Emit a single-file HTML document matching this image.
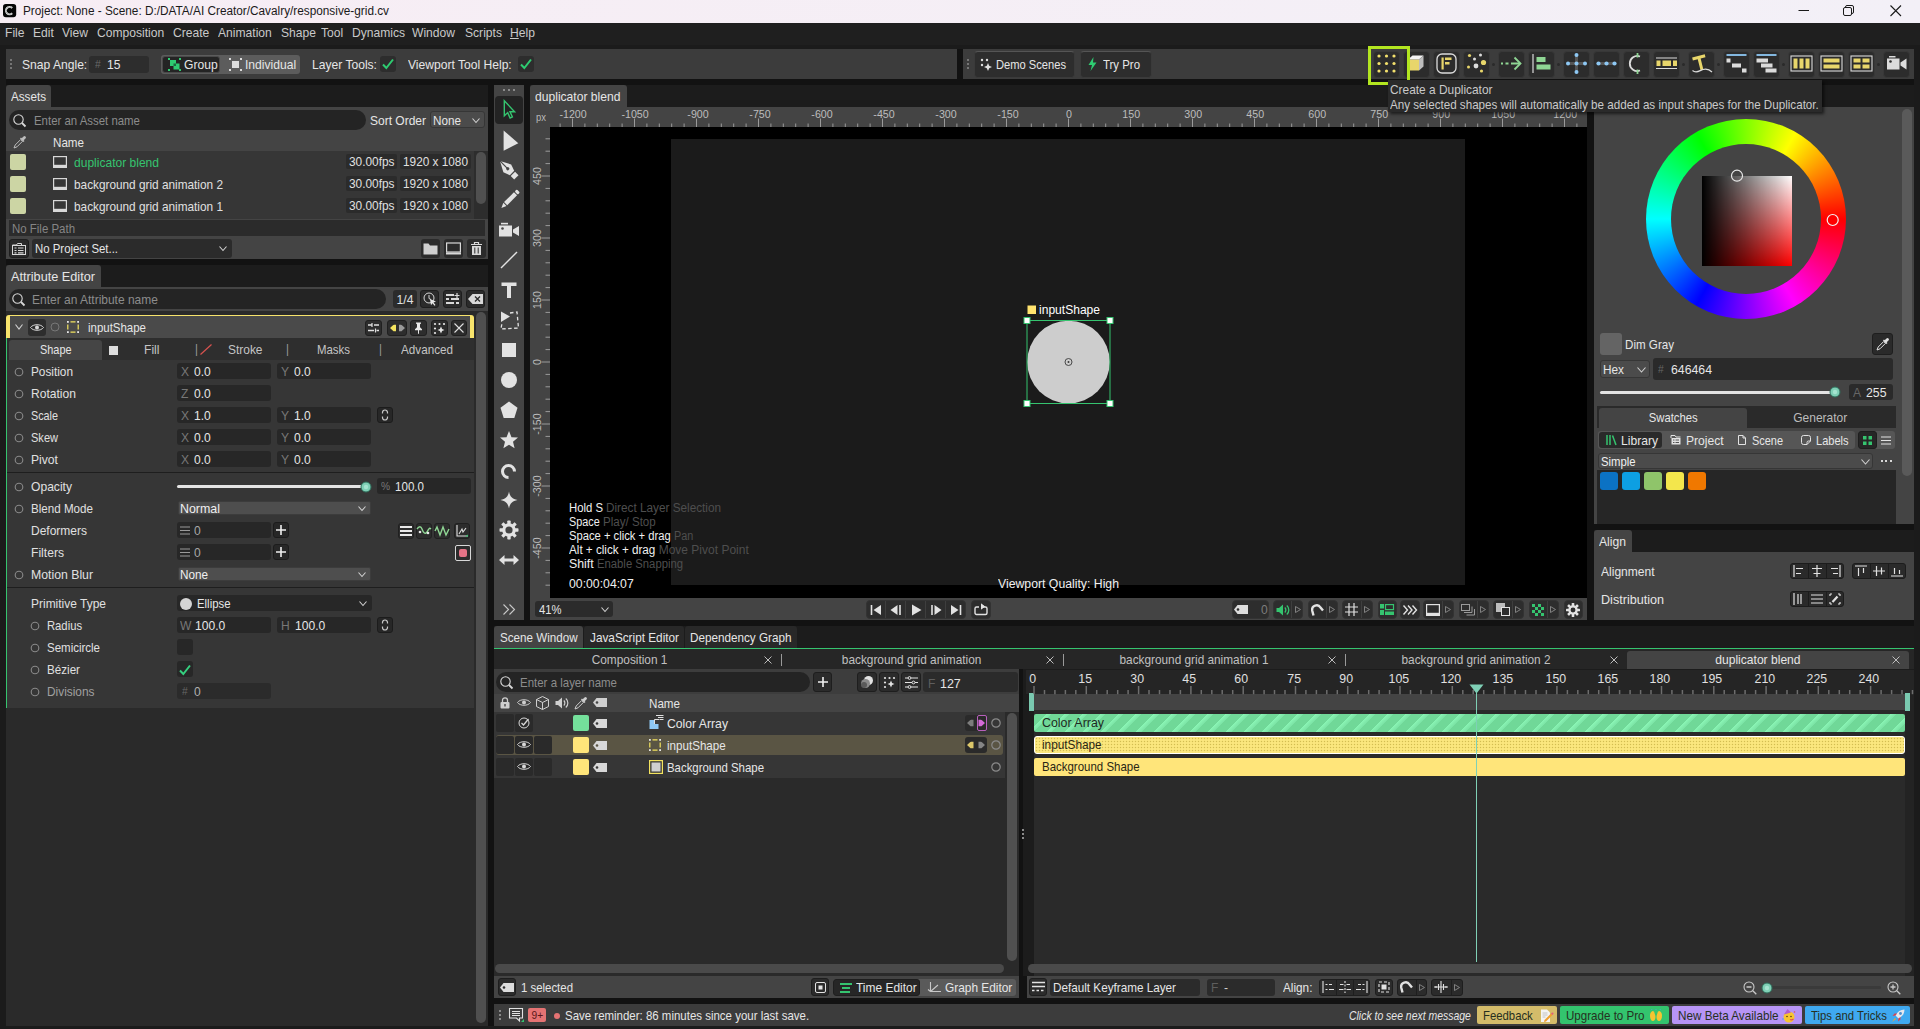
<!DOCTYPE html>
<html><head><meta charset="utf-8"><title>Cavalry</title>
<style>
html,body{margin:0;padding:0;}
body{width:1920px;height:1029px;overflow:hidden;background:#1b1b1b;position:relative;font-family:"Liberation Sans",sans-serif;font-size:13px;color:#dcdcdc;}
div,span.t,svg{position:absolute;box-sizing:border-box;}
span.t{white-space:nowrap;}
svg{overflow:visible;}
.r2{border-radius:2px}.r3{border-radius:3px}.r4{border-radius:4px}
.ph{color:#8a8a8a}
</style></head><body>
<div style="left:6px;top:79px;width:1908px;height:947px;background:#121212;"></div>
<div style="left:6px;top:85px;width:482px;height:22px;background:#1c1c1c;"></div>
<div style="left:6px;top:265px;width:482px;height:22px;background:#1c1c1c;"></div>
<div style="left:530px;top:85px;width:1057px;height:22px;background:#1c1c1c;"></div>
<div style="left:1593.5px;top:85px;width:320.5px;height:22px;background:#1c1c1c;"></div>
<div style="left:1593.5px;top:530px;width:320.5px;height:22px;background:#1c1c1c;"></div>
<div style="left:494.2px;top:626px;width:1419.8px;height:22px;background:#1c1c1c;"></div>
<div style="left:0px;top:0px;width:1920px;height:22.7px;background:linear-gradient(to right,#f7edf4,#f3f0f7);"></div>
<svg style="left:3.4px;top:4px;" width="13.2" height="13.2" viewBox="0 0 16 16"><rect x="0" y="0" width="16" height="16" rx="3.500" fill="#050505"/><path d="M11.200 4.800A4.500 4.500 0 1 0 11.200 11.200" fill="none" stroke="#e4e4e4" stroke-width="2.300"/><path d="M11.200 4.800A4.500 4.500 0 1 0 11.200 11.200" fill="none" stroke="#050505" stroke-width="0.500" stroke-dasharray="1 1"/></svg>
<span class="t" style="left:23.4px;top:3.0px;line-height:16px;font-size:12px;color:#1a1a1a;transform:scaleX(0.983);transform-origin:0 50%;">Project: None - Scene: D:/DATA/AI Creator/Cavalry/responsive-grid.cv</span>
<svg style="left:1798.3px;top:4px;" width="12" height="12" viewBox="0 0 12 12"><path d="M0.5 6.5h10.5" stroke="#1a1a1a" stroke-width="1"/></svg>
<svg style="left:1843.3px;top:4.5px;" width="12" height="12" viewBox="0 0 12 12"><rect x="0.5" y="2.5" width="8" height="8" rx="1.5" fill="none" stroke="#1a1a1a"/><path d="M2.5 2.5v-0.5a1.5 1.5 0 0 1 1.5-1.5h5a1.5 1.5 0 0 1 1.5 1.5v5a1.5 1.5 0 0 1-1.5 1.5h-0.5" fill="none" stroke="#1a1a1a"/></svg>
<svg style="left:1889.6px;top:4.5px;" width="12" height="12" viewBox="0 0 12 12"><path d="M0.5 0.5 11 11M11 0.5 0.5 11" stroke="#1a1a1a" stroke-width="1.1"/></svg>
<div style="left:0px;top:23px;width:1920px;height:22px;background:#1f1f1f;"></div>
<span class="t" style="left:5.0px;top:24.0px;line-height:17px;font-size:13px;color:#c9c9c9;transform:scaleX(0.930);transform-origin:0 50%;">File</span>
<span class="t" style="left:33.0px;top:24.0px;line-height:17px;font-size:13px;color:#c9c9c9;transform:scaleX(0.930);transform-origin:0 50%;">Edit</span>
<span class="t" style="left:62.0px;top:24.0px;line-height:17px;font-size:13px;color:#c9c9c9;transform:scaleX(0.930);transform-origin:0 50%;">View</span>
<span class="t" style="left:97.0px;top:24.0px;line-height:17px;font-size:13px;color:#c9c9c9;transform:scaleX(0.930);transform-origin:0 50%;">Composition</span>
<span class="t" style="left:173.0px;top:24.0px;line-height:17px;font-size:13px;color:#c9c9c9;transform:scaleX(0.930);transform-origin:0 50%;">Create</span>
<span class="t" style="left:218.0px;top:24.0px;line-height:17px;font-size:13px;color:#c9c9c9;transform:scaleX(0.930);transform-origin:0 50%;">Animation</span>
<span class="t" style="left:281.0px;top:24.0px;line-height:17px;font-size:13px;color:#c9c9c9;transform:scaleX(0.930);transform-origin:0 50%;">Shape</span>
<span class="t" style="left:321.0px;top:24.0px;line-height:17px;font-size:13px;color:#c9c9c9;transform:scaleX(0.930);transform-origin:0 50%;">Tool</span>
<span class="t" style="left:352.0px;top:24.0px;line-height:17px;font-size:13px;color:#c9c9c9;transform:scaleX(0.930);transform-origin:0 50%;">Dynamics</span>
<span class="t" style="left:412.0px;top:24.0px;line-height:17px;font-size:13px;color:#c9c9c9;transform:scaleX(0.930);transform-origin:0 50%;">Window</span>
<span class="t" style="left:465.0px;top:24.0px;line-height:17px;font-size:13px;color:#c9c9c9;transform:scaleX(0.930);transform-origin:0 50%;">Scripts</span>
<span class="t" style="left:510.0px;top:24.0px;line-height:17px;font-size:13px;color:#c9c9c9;transform:scaleX(0.930);transform-origin:0 50%;"><u>H</u>elp</span>
<div style="left:6px;top:49px;width:951px;height:30px;background:#3c3c3c;"></div>
<div style="left:957px;top:49px;width:6px;height:30px;background:#121212;"></div>
<div style="left:10px;top:59px;width:2px;height:2px;background:#8a8a8a;border-radius:1px;"></div>
<div style="left:10px;top:63px;width:2px;height:2px;background:#8a8a8a;border-radius:1px;"></div>
<div style="left:10px;top:67px;width:2px;height:2px;background:#8a8a8a;border-radius:1px;"></div>
<span class="t" style="left:22.0px;top:56.0px;line-height:17px;font-size:13px;color:#e6e6e6;transform:scaleX(0.930);transform-origin:0 50%;">Snap Angle:</span>
<div class="r3" style="left:89px;top:56px;width:60px;height:17px;background:#2d2d2d;"></div>
<span class="t" style="left:95.0px;top:57.0px;line-height:15px;font-size:11px;color:#6a6a6a;transform:scaleX(0.930);transform-origin:0 50%;">#</span>
<span class="t" style="left:107.0px;top:56.0px;line-height:17px;font-size:13px;color:#e6e6e6;transform:scaleX(0.930);transform-origin:0 50%;">15</span>
<div class="r3" style="left:161px;top:55px;width:139px;height:19px;background:#5c5c5c;"></div>
<div class="r3" style="left:162px;top:56px;width:58px;height:17px;background:#242424;border:1px solid #4a4a4a;"></div>
<svg style="left:168px;top:58px;" width="13" height="13" viewBox="0 0 13 13"><g fill="#2ecc71"><rect x="2" y="2" width="6" height="6"/><rect x="5.5" y="5.500" width="6" height="6"/><rect x="0" y="0" width="2" height="2"/><rect x="11" y="0" width="2" height="2"/><rect x="0" y="11" width="2" height="2"/><rect x="11" y="11" width="2" height="2"/></g><rect x="5.5" y="5.500" width="2.500" height="2.500" fill="#1a6b41"/></svg>
<span class="t" style="left:184.0px;top:56.0px;line-height:17px;font-size:13px;color:#e6e6e6;transform:scaleX(0.930);transform-origin:0 50%;">Group</span>
<svg style="left:229px;top:58px;" width="13" height="13" viewBox="0 0 13 13"><g fill="#dcdcdc"><rect x="3" y="3" width="7" height="7"/><rect x="0" y="0" width="2" height="2"/><rect x="11" y="0" width="2" height="2"/><rect x="0" y="11" width="2" height="2"/><rect x="11" y="11" width="2" height="2"/></g></svg>
<span class="t" style="left:245.0px;top:56.0px;line-height:17px;font-size:13px;color:#e6e6e6;transform:scaleX(0.930);transform-origin:0 50%;">Individual</span>
<span class="t" style="left:312.0px;top:56.0px;line-height:17px;font-size:13px;color:#e6e6e6;transform:scaleX(0.930);transform-origin:0 50%;">Layer Tools:</span>
<div class="r3" style="left:380px;top:56px;width:16px;height:16px;background:#2d2d2d;"></div>
<svg style="left:382px;top:58px;" width="12" height="12" viewBox="0 0 12 12"><path d="M1 6.500 4.300 10 11 1.500" fill="none" stroke="#2ecc71" stroke-width="2"/></svg>
<span class="t" style="left:408.0px;top:56.0px;line-height:17px;font-size:13px;color:#e6e6e6;transform:scaleX(0.930);transform-origin:0 50%;">Viewport Tool Help:</span>
<div class="r3" style="left:518px;top:56px;width:16px;height:16px;background:#2d2d2d;"></div>
<svg style="left:520px;top:58px;" width="12" height="12" viewBox="0 0 12 12"><path d="M1 6.500 4.300 10 11 1.500" fill="none" stroke="#2ecc71" stroke-width="2"/></svg>
<div style="left:963px;top:49px;width:951px;height:30px;background:#3c3c3c;"></div>
<div style="left:967px;top:59px;width:2px;height:2px;background:#8a8a8a;border-radius:1px;"></div>
<div style="left:967px;top:63px;width:2px;height:2px;background:#8a8a8a;border-radius:1px;"></div>
<div style="left:967px;top:67px;width:2px;height:2px;background:#8a8a8a;border-radius:1px;"></div>
<div class="r4" style="left:974.4px;top:50.5px;width:100.6px;height:27px;background:#2d2d2d;border:1px solid #3a3a3a;border-top-color:#555555;"></div>
<svg style="left:980px;top:58px;" width="13" height="13" viewBox="0 0 13 13"><g fill="#e0e0e0"><circle cx="2" cy="2" r="1.2"/><circle cx="7" cy="2" r="1.2"/><circle cx="2" cy="7" r="1.2"/><path d="M8 5l1.200 2.800L12 9l-2.800 1.200L8 13l-1.200-2.800L4 9l2.800-1.200z"/></g></svg>
<span class="t" style="left:996.0px;top:56.0px;line-height:17px;font-size:13px;color:#e6e6e6;transform:scaleX(0.857);transform-origin:0 50%;">Demo Scenes</span>
<div class="r4" style="left:1080px;top:50.5px;width:72px;height:27px;background:#2d2d2d;border:1px solid #3a3a3a;border-top-color:#555555;"></div>
<svg style="left:1088px;top:57px;" width="9" height="14" viewBox="0 0 9 14"><path d="M5.500 0 0.500 8h3.500L2.500 14 8.500 5.500H5z" fill="#2ecc71"/></svg>
<span class="t" style="left:1103.3px;top:56.0px;line-height:17px;font-size:13px;color:#e6e6e6;transform:scaleX(0.878);transform-origin:0 50%;">Try Pro</span>
<div style="left:6px;top:85px;width:45px;height:22px;background:#444444;border-radius:3px 3px 0 0;"></div>
<span class="t" style="left:11.0px;top:88.0px;line-height:17px;font-size:13px;color:#e6e6e6;transform:scaleX(0.897);transform-origin:0 50%;">Assets</span>
<div style="left:6px;top:107px;width:482px;height:152px;background:#444444;"></div>
<div style="left:9px;top:110px;width:357px;height:20px;background:#242424;border-radius:10px;"></div>
<svg style="left:13px;top:114px;" width="14" height="14" viewBox="0 0 14 14"><circle cx="5.500" cy="5.500" r="4.700" fill="none" stroke="#d8d8d8" stroke-width="1.100"/><path d="M9 9l3.500 3.500" stroke="#d8d8d8" stroke-width="1.800"/></svg>
<span class="t" style="left:33.5px;top:112.0px;line-height:17px;font-size:13px;color:#8c8c8c;transform:scaleX(0.878);transform-origin:0 50%;">Enter an Asset name</span>
<span class="t" style="left:370.0px;top:112.0px;line-height:17px;font-size:13px;color:#e6e6e6;transform:scaleX(0.923);transform-origin:0 50%;">Sort Order</span>
<div class="r3" style="left:430.4px;top:111.2px;width:54.2px;height:17.3px;background:#4b4b4b;border:1px solid #363636;"></div>
<span class="t" style="left:433.0px;top:112.0px;line-height:17px;font-size:13px;color:#e6e6e6;transform:scaleX(0.901);transform-origin:0 50%;">None</span>
<svg style="left:472px;top:118px;" width="8" height="5" viewBox="0 0 8 5"><path d="M0.500 0.500 4.0 4.5 7.5 0.500" fill="none" stroke="#d0d0d0" stroke-width="1.1"/></svg>
<svg style="left:13px;top:135px;" width="14" height="14" viewBox="0 0 14 14"><path d="M1 13l1.200-3 5.500-5.500 1.800 1.800L4 11.800z" fill="none" stroke="#bdbdbd" stroke-width="1"/><path d="M7 3.500l3.500 3.500 1-1-0.800-0.800 1.800-1.800a1.400 1.400 0 0 0-2-2L8.700 3.200 8 2.500z" fill="#bdbdbd"/></svg>
<span class="t" style="left:53.0px;top:134.0px;line-height:17px;font-size:13px;color:#e6e6e6;transform:scaleX(0.894);transform-origin:0 50%;">Name</span>
<div style="left:6px;top:151px;width:468px;height:67.8px;background:#363636;"></div>
<div style="left:474px;top:151px;width:14px;height:67.8px;background:#2d2d2d;"></div>
<div class="r2" style="left:10px;top:154px;width:16px;height:16px;background:#ccd5a4;"></div>
<svg style="left:53px;top:156px;" width="14" height="12" viewBox="0 0 14 12"><rect x="0.600" y="0.600" width="12.800" height="8.800" fill="none" stroke="#d8d8d8" stroke-width="1.200"/><rect x="0" y="10" width="14" height="2" fill="#d8d8d8"/></svg>
<span class="t" style="left:74.0px;top:154.0px;line-height:17px;font-size:13px;color:#35c46f;transform:scaleX(0.926);transform-origin:0 50%;">duplicator blend</span>
<div class="r2" style="left:346.2px;top:154.1px;width:50.5px;height:15.4px;background:#2b2b2b;"></div>
<span class="t" style="left:348.5px;top:153.0px;line-height:17px;font-size:13px;color:#e0e0e0;transform:scaleX(0.912);transform-origin:0 50%;">30.00fps</span>
<div class="r2" style="left:400.1px;top:154.1px;width:70.8px;height:15.4px;background:#2b2b2b;"></div>
<span class="t" style="left:403.0px;top:153.0px;line-height:17px;font-size:13px;color:#e0e0e0;transform:scaleX(0.908);transform-origin:0 50%;">1920 x 1080</span>
<div class="r2" style="left:10px;top:176px;width:16px;height:16px;background:#ccd5a4;"></div>
<svg style="left:53px;top:178px;" width="14" height="12" viewBox="0 0 14 12"><rect x="0.600" y="0.600" width="12.800" height="8.800" fill="none" stroke="#d8d8d8" stroke-width="1.200"/><rect x="0" y="10" width="14" height="2" fill="#d8d8d8"/></svg>
<span class="t" style="left:74.0px;top:176.0px;line-height:17px;font-size:13px;color:#e0e0e0;transform:scaleX(0.908);transform-origin:0 50%;">background grid animation 2</span>
<div class="r2" style="left:346.2px;top:176.1px;width:50.5px;height:15.4px;background:#2b2b2b;"></div>
<span class="t" style="left:348.5px;top:175.0px;line-height:17px;font-size:13px;color:#e0e0e0;transform:scaleX(0.912);transform-origin:0 50%;">30.00fps</span>
<div class="r2" style="left:400.1px;top:176.1px;width:70.8px;height:15.4px;background:#2b2b2b;"></div>
<span class="t" style="left:403.0px;top:175.0px;line-height:17px;font-size:13px;color:#e0e0e0;transform:scaleX(0.908);transform-origin:0 50%;">1920 x 1080</span>
<div class="r2" style="left:10px;top:198px;width:16px;height:16px;background:#ccd5a4;"></div>
<svg style="left:53px;top:200px;" width="14" height="12" viewBox="0 0 14 12"><rect x="0.600" y="0.600" width="12.800" height="8.800" fill="none" stroke="#d8d8d8" stroke-width="1.200"/><rect x="0" y="10" width="14" height="2" fill="#d8d8d8"/></svg>
<span class="t" style="left:74.0px;top:198.0px;line-height:17px;font-size:13px;color:#e0e0e0;transform:scaleX(0.908);transform-origin:0 50%;">background grid animation 1</span>
<div class="r2" style="left:346.2px;top:198.1px;width:50.5px;height:15.4px;background:#2b2b2b;"></div>
<span class="t" style="left:348.5px;top:197.0px;line-height:17px;font-size:13px;color:#e0e0e0;transform:scaleX(0.912);transform-origin:0 50%;">30.00fps</span>
<div class="r2" style="left:400.1px;top:198.1px;width:70.8px;height:15.4px;background:#2b2b2b;"></div>
<span class="t" style="left:403.0px;top:197.0px;line-height:17px;font-size:13px;color:#e0e0e0;transform:scaleX(0.908);transform-origin:0 50%;">1920 x 1080</span>
<div style="left:476px;top:151.8px;width:10px;height:52.5px;background:#505050;border-radius:5px;"></div>
<div style="left:9px;top:220px;width:476px;height:16px;background:#2b2b2b;"></div>
<span class="t" style="left:11.5px;top:220.0px;line-height:17px;font-size:13px;color:#858585;transform:scaleX(0.881);transform-origin:0 50%;">No File Path</span>
<div class="r3" style="left:9px;top:239px;width:20px;height:19px;background:#2b2b2b;border:1px solid #1e1e1e;"></div>
<svg style="left:12px;top:242px;" width="14" height="13" viewBox="0 0 14 13"><path d="M0.500 3h4l1-1.500h4v1.500" fill="none" stroke="#d8d8d8" stroke-width="1"/><rect x="0.500" y="3.500" width="13" height="9" fill="none" stroke="#d8d8d8" stroke-width="1"/><path d="M2.500 6h2M6 6h5.500M2.500 8.500h2M6 8.500h5.500M2.500 10.800h2M6 10.800h5.500" stroke="#d8d8d8" stroke-width="1.200"/></svg>
<div class="r3" style="left:32px;top:239px;width:200px;height:19px;background:#2b2b2b;"></div>
<span class="t" style="left:35.0px;top:240.0px;line-height:17px;font-size:13px;color:#e6e6e6;transform:scaleX(0.877);transform-origin:0 50%;">No Project Set...</span>
<svg style="left:219px;top:246px;" width="8" height="5" viewBox="0 0 8 5"><path d="M0.500 0.500 4.0 4.5 7.5 0.500" fill="none" stroke="#d0d0d0" stroke-width="1.1"/></svg>
<div class="r3" style="left:421px;top:239px;width:19px;height:19px;background:#2b2b2b;"></div>
<div class="r3" style="left:444px;top:239px;width:19px;height:19px;background:#2b2b2b;"></div>
<div class="r3" style="left:467px;top:239px;width:19px;height:19px;background:#2b2b2b;"></div>
<svg style="left:423px;top:242px;" width="15" height="13" viewBox="0 0 15 13"><path d="M0.500 12.500v-11h5l1.500 2h7.500v9z" fill="#cfcfcf"/></svg>
<svg style="left:446px;top:242px;" width="15" height="13" viewBox="0 0 15 13"><rect x="0.600" y="1" width="13.800" height="9" fill="none" stroke="#d8d8d8" stroke-width="1.200"/><rect x="0" y="10.500" width="15" height="2" fill="#d8d8d8"/></svg>
<svg style="left:470px;top:241px;" width="13" height="15" viewBox="0 0 13 15"><path d="M1 3.500h11M4.500 3V1.500h4V3" fill="none" stroke="#d8d8d8" stroke-width="1.200"/><path d="M2 5h9v9H2z" fill="#d8d8d8"/><path d="M4.800 6.500v6M8.200 6.500v6" stroke="#2b2b2b" stroke-width="1"/></svg>
<div style="left:6px;top:265px;width:95px;height:22px;background:#444444;border-radius:3px 3px 0 0;"></div>
<span class="t" style="left:11.0px;top:268.0px;line-height:17px;font-size:13px;color:#e6e6e6;transform:scaleX(0.977);transform-origin:0 50%;">Attribute Editor</span>
<div style="left:6px;top:287px;width:482px;height:739px;background:#2a2a2a;"></div>
<div style="left:6px;top:287px;width:482px;height:23.9px;background:#444444;"></div>
<div style="left:9px;top:289px;width:377px;height:20px;background:#242424;border-radius:10px;"></div>
<svg style="left:12px;top:293px;" width="14" height="14" viewBox="0 0 14 14"><circle cx="5.500" cy="5.500" r="4.700" fill="none" stroke="#d8d8d8" stroke-width="1.100"/><path d="M9 9l3.500 3.500" stroke="#d8d8d8" stroke-width="1.800"/></svg>
<span class="t" style="left:32.0px;top:291.0px;line-height:17px;font-size:13px;color:#8c8c8c;transform:scaleX(0.922);transform-origin:0 50%;">Enter an Attribute name</span>
<div class="r3" style="left:393px;top:290px;width:24px;height:18px;background:#2b2b2b;"></div>
<span class="t" style="left:396.0px;top:291.0px;line-height:17px;font-size:13px;color:#e0e0e0;transform:scaleX(0.940);transform-origin:50% 50%;">1/4</span>
<div class="r3" style="left:420px;top:290px;width:19px;height:18px;background:#2b2b2b;border:1px solid #1e1e1e;"></div>
<div class="r3" style="left:443px;top:290px;width:19px;height:18px;background:#2b2b2b;border:1px solid #1e1e1e;"></div>
<div class="r3" style="left:466px;top:290px;width:19px;height:18px;background:#2b2b2b;border:1px solid #1e1e1e;"></div>
<svg style="left:423px;top:292px;" width="14" height="14" viewBox="0 0 14 14"><circle cx="6" cy="6" r="5" fill="none" stroke="#d8d8d8" stroke-width="1"/><path d="M6 3v3.500l2 1" fill="none" stroke="#d8d8d8" stroke-width="1"/><path d="M7 7l6 2.500-2.500 1 2 2.500-1 0.800-2-2.500-1.500 2z" fill="#e8e8e8"/></svg>
<svg style="left:446px;top:293px;" width="14" height="12" viewBox="0 0 14 12"><path d="M0 2h8M0 6h13M0 10h13" stroke="#d8d8d8" stroke-width="1.800"/><path d="M11 0v5M8.500 2.500h5" stroke="#d8d8d8" stroke-width="1.200"/><rect x="3" y="4.500" width="2" height="3" fill="#2b2b2b"/><rect x="8" y="8.500" width="2" height="3" fill="#2b2b2b"/></svg>
<svg style="left:468px;top:294px;" width="15" height="10" viewBox="0 0 15 10"><path d="M0 5 4.500 0H15v10H4.500z" fill="#d8d8d8"/><path d="M7 2.500l5 5M12 2.500l-5 5" stroke="#2b2b2b" stroke-width="1.300"/></svg>
<div style="left:476.3px;top:312px;width:9.7px;height:710.7px;background:#4f4f4f;border-radius:5px;"></div>
<div style="left:6px;top:315px;width:468px;height:22.8px;background:#4a4a4a;border:4px solid #f8e46c;border-top-width:1.500px;border-bottom:none;border-radius:3px 3px 0 0;"></div>
<svg style="left:15px;top:324px;" width="8" height="6" viewBox="0 0 8 6"><path d="M0.500 0.500 4 5 7.500 0.500" fill="none" stroke="#d0d0d0" stroke-width="1.1"/></svg>
<div class="r3" style="left:28px;top:319px;width:18px;height:17px;background:#2d2d2d;"></div>
<svg style="left:30px;top:323px;" width="14" height="9" viewBox="0 0 14 9"><path d="M0.500 4.500C3 0.800 11 0.800 13.500 4.500 11 8.200 3 8.200 0.500 4.500z" fill="none" stroke="#d8d8d8" stroke-width="1"/><circle cx="7" cy="4.500" r="2" fill="#d8d8d8"/></svg>
<svg style="left:50px;top:322px;" width="10" height="10" viewBox="0 0 10 10"><circle cx="5" cy="5" r="4" fill="none" stroke="#777" stroke-width="1"/></svg>
<svg style="left:67px;top:321px;" width="12" height="12" viewBox="0 0 12 12"><path d="M3.500 0.800h5M3.500 11.200h5M0.800 3.500v5M11.200 3.500v5" stroke="#f3e35f" stroke-width="1.200"/><g fill="#e8e8e8"><rect x="0" y="0" width="1.800" height="1.800"/><rect x="10.200" y="0" width="1.800" height="1.800"/><rect x="0" y="10.200" width="1.800" height="1.800"/><rect x="10.200" y="10.200" width="1.800" height="1.800"/></g></svg>
<span class="t" style="left:87.5px;top:319.0px;line-height:17px;font-size:13px;color:#e6e6e6;transform:scaleX(0.881);transform-origin:0 50%;">inputShape</span>
<div class="r3" style="left:365px;top:320px;width:17px;height:16px;background:#2d2d2d;border:1px solid #202020;"></div>
<div class="r3" style="left:387px;top:320px;width:20px;height:16px;background:#2d2d2d;border:1px solid #202020;"></div>
<div class="r3" style="left:410px;top:320px;width:17px;height:16px;background:#2d2d2d;border:1px solid #202020;"></div>
<div class="r3" style="left:431px;top:320px;width:17px;height:16px;background:#2d2d2d;border:1px solid #202020;"></div>
<div class="r3" style="left:451px;top:320px;width:16px;height:16px;background:#2d2d2d;border:1px solid #202020;"></div>
<svg style="left:367px;top:322px;" width="13" height="12" viewBox="0 0 13 12"><path d="M1 3h4M7 3h5M1 8.500h6M9.500 8.500h2.500" stroke="#e0e0e0" stroke-width="1.600"/><path d="M5 1v4M8.500 6.500v4" stroke="#e0e0e0" stroke-width="1.200"/></svg>
<svg style="left:390px;top:324px;" width="15" height="8" viewBox="0 0 15 8"><path d="M0 4 3 1.200a1.500 1.500 0 0 1 1.200-0.500H6v6.600H4.200A1.500 1.500 0 0 1 3 6.800z" fill="#f3e35f"/><path d="M15 4 12 1.200a1.500 1.500 0 0 0-1.200-0.500H9v6.600h1.800a1.500 1.500 0 0 0 1.200-0.500z" fill="#9a9a9a"/></svg>
<svg style="left:413px;top:322px;" width="11" height="12" viewBox="0 0 11 12"><path d="M3 0.500h5v1l-1 0.800v3l2 2v1H6v3.200L5.500 12 5 11.500V8.300H2v-1l2-2v-3L3 1.500z" fill="#e8e8e8"/></svg>
<svg style="left:433px;top:322px;" width="13" height="12" viewBox="0 0 13 12"><g fill="#e8e8e8"><circle cx="2" cy="2" r="1.100"/><circle cx="6.500" cy="2" r="1.100"/><circle cx="11" cy="2" r="1.100"/><circle cx="2" cy="6.500" r="1.100"/><circle cx="2" cy="11" r="1.100"/><path d="M8 4.500l1.100 2.400L11.500 8 9.100 9.100 8 11.500 6.900 9.100 4.500 8l2.400-1.100z"/></g></svg>
<svg style="left:454px;top:323px;" width="10" height="10" viewBox="0 0 10 10"><path d="M0.500 0.500l9 9M9.500 0.500l-9 9" stroke="#e0e0e0" stroke-width="1.100"/></svg>
<div style="left:7px;top:337.8px;width:467px;height:22.2px;background:#2e2e2e;"></div>
<div style="left:7px;top:360px;width:467.2px;height:348px;background:#363636;"></div>
<div style="left:6px;top:337.8px;width:1.3px;height:370.2px;background:#35c46f;"></div>
<div style="left:8.7px;top:340px;width:93.5px;height:20px;background:#454545;border-radius:3px 3px 0 0;"></div>
<span class="t" style="left:36.7px;top:341.0px;line-height:17px;font-size:13px;color:#e6e6e6;transform:scaleX(0.838);transform-origin:50% 50%;">Shape</span>
<div style="left:108.5px;top:345.6px;width:9.3px;height:9.1px;background:#dcdcdc;"></div>
<span class="t" style="left:144.0px;top:341.0px;line-height:17px;font-size:13px;color:#c4c4c4;transform:scaleX(0.933);transform-origin:0 50%;">Fill</span>
<span class="t" style="left:195.0px;top:341.0px;line-height:16px;font-size:12px;color:#9a9a9a;transform:scaleX(0.930);transform-origin:0 50%;">|</span>
<svg style="left:200px;top:344px;" width="12" height="11" viewBox="0 0 12 11"><path d="M0.500 10.500 11.500 0.500" stroke="#d9534f" stroke-width="1.200"/></svg>
<span class="t" style="left:227.5px;top:341.0px;line-height:17px;font-size:13px;color:#c4c4c4;transform:scaleX(0.918);transform-origin:0 50%;">Stroke</span>
<span class="t" style="left:286.0px;top:341.0px;line-height:16px;font-size:12px;color:#9a9a9a;transform:scaleX(0.930);transform-origin:0 50%;">|</span>
<span class="t" style="left:317.0px;top:341.0px;line-height:17px;font-size:13px;color:#c4c4c4;transform:scaleX(0.879);transform-origin:0 50%;">Masks</span>
<span class="t" style="left:379.0px;top:341.0px;line-height:16px;font-size:12px;color:#9a9a9a;transform:scaleX(0.930);transform-origin:0 50%;">|</span>
<span class="t" style="left:400.5px;top:341.0px;line-height:17px;font-size:13px;color:#c4c4c4;transform:scaleX(0.899);transform-origin:0 50%;">Advanced</span>
<svg style="left:13.5px;top:366.5px;" width="10" height="10" viewBox="0 0 10 10"><circle cx="5" cy="5" r="3.800" fill="none" stroke="#8a8a8a" stroke-width="1.100"/></svg>
<span class="t" style="left:30.5px;top:363.0px;line-height:17px;font-size:13px;color:#e0e0e0;transform:scaleX(0.908);transform-origin:0 50%;">Position</span>
<div class="r3" style="left:177px;top:363.0px;width:94px;height:15.5px;background:#272727;"></div>
<span class="t" style="left:180.5px;top:363.0px;line-height:17px;font-size:13px;color:#777777;transform:scaleX(0.930);transform-origin:0 50%;">X</span>
<span class="t" style="left:193.5px;top:363.0px;line-height:17px;font-size:13px;color:#e6e6e6;transform:scaleX(0.930);transform-origin:0 50%;">0.0</span>
<div class="r3" style="left:277px;top:363.0px;width:94px;height:15.5px;background:#272727;"></div>
<span class="t" style="left:280.5px;top:363.0px;line-height:17px;font-size:13px;color:#777777;transform:scaleX(0.930);transform-origin:0 50%;">Y</span>
<span class="t" style="left:293.5px;top:363.0px;line-height:17px;font-size:13px;color:#e6e6e6;transform:scaleX(0.930);transform-origin:0 50%;">0.0</span>
<svg style="left:13.5px;top:388.5px;" width="10" height="10" viewBox="0 0 10 10"><circle cx="5" cy="5" r="3.800" fill="none" stroke="#8a8a8a" stroke-width="1.100"/></svg>
<span class="t" style="left:30.5px;top:385.0px;line-height:17px;font-size:13px;color:#e0e0e0;transform:scaleX(0.929);transform-origin:0 50%;">Rotation</span>
<div class="r3" style="left:177px;top:385.0px;width:94px;height:15.5px;background:#272727;"></div>
<span class="t" style="left:180.5px;top:385.0px;line-height:17px;font-size:13px;color:#777777;transform:scaleX(0.930);transform-origin:0 50%;">Z</span>
<span class="t" style="left:193.5px;top:385.0px;line-height:17px;font-size:13px;color:#e6e6e6;transform:scaleX(0.930);transform-origin:0 50%;">0.0</span>
<svg style="left:13.5px;top:410.5px;" width="10" height="10" viewBox="0 0 10 10"><circle cx="5" cy="5" r="3.800" fill="none" stroke="#8a8a8a" stroke-width="1.100"/></svg>
<span class="t" style="left:30.5px;top:407.0px;line-height:17px;font-size:13px;color:#e0e0e0;transform:scaleX(0.830);transform-origin:0 50%;">Scale</span>
<div class="r3" style="left:177px;top:407.0px;width:94px;height:15.5px;background:#272727;"></div>
<span class="t" style="left:180.5px;top:407.0px;line-height:17px;font-size:13px;color:#777777;transform:scaleX(0.930);transform-origin:0 50%;">X</span>
<span class="t" style="left:193.5px;top:407.0px;line-height:17px;font-size:13px;color:#e6e6e6;transform:scaleX(0.930);transform-origin:0 50%;">1.0</span>
<div class="r3" style="left:277px;top:407.0px;width:94px;height:15.5px;background:#272727;"></div>
<span class="t" style="left:280.5px;top:407.0px;line-height:17px;font-size:13px;color:#777777;transform:scaleX(0.930);transform-origin:0 50%;">Y</span>
<span class="t" style="left:293.5px;top:407.0px;line-height:17px;font-size:13px;color:#e6e6e6;transform:scaleX(0.930);transform-origin:0 50%;">1.0</span>
<svg style="left:13.5px;top:432.5px;" width="10" height="10" viewBox="0 0 10 10"><circle cx="5" cy="5" r="3.800" fill="none" stroke="#8a8a8a" stroke-width="1.100"/></svg>
<span class="t" style="left:30.5px;top:429.0px;line-height:17px;font-size:13px;color:#e0e0e0;transform:scaleX(0.849);transform-origin:0 50%;">Skew</span>
<div class="r3" style="left:177px;top:429.0px;width:94px;height:15.5px;background:#272727;"></div>
<span class="t" style="left:180.5px;top:429.0px;line-height:17px;font-size:13px;color:#777777;transform:scaleX(0.930);transform-origin:0 50%;">X</span>
<span class="t" style="left:193.5px;top:429.0px;line-height:17px;font-size:13px;color:#e6e6e6;transform:scaleX(0.930);transform-origin:0 50%;">0.0</span>
<div class="r3" style="left:277px;top:429.0px;width:94px;height:15.5px;background:#272727;"></div>
<span class="t" style="left:280.5px;top:429.0px;line-height:17px;font-size:13px;color:#777777;transform:scaleX(0.930);transform-origin:0 50%;">Y</span>
<span class="t" style="left:293.5px;top:429.0px;line-height:17px;font-size:13px;color:#e6e6e6;transform:scaleX(0.930);transform-origin:0 50%;">0.0</span>
<svg style="left:13.5px;top:454.5px;" width="10" height="10" viewBox="0 0 10 10"><circle cx="5" cy="5" r="3.800" fill="none" stroke="#8a8a8a" stroke-width="1.100"/></svg>
<span class="t" style="left:30.5px;top:451.0px;line-height:17px;font-size:13px;color:#e0e0e0;transform:scaleX(0.934);transform-origin:0 50%;">Pivot</span>
<div class="r3" style="left:177px;top:451.0px;width:94px;height:15.5px;background:#272727;"></div>
<span class="t" style="left:180.5px;top:451.0px;line-height:17px;font-size:13px;color:#777777;transform:scaleX(0.930);transform-origin:0 50%;">X</span>
<span class="t" style="left:193.5px;top:451.0px;line-height:17px;font-size:13px;color:#e6e6e6;transform:scaleX(0.930);transform-origin:0 50%;">0.0</span>
<div class="r3" style="left:277px;top:451.0px;width:94px;height:15.5px;background:#272727;"></div>
<span class="t" style="left:280.5px;top:451.0px;line-height:17px;font-size:13px;color:#777777;transform:scaleX(0.930);transform-origin:0 50%;">Y</span>
<span class="t" style="left:293.5px;top:451.0px;line-height:17px;font-size:13px;color:#e6e6e6;transform:scaleX(0.930);transform-origin:0 50%;">0.0</span>
<div class="r3" style="left:377px;top:407.0px;width:16px;height:16px;background:#272727;border:1px solid #1c1c1c;"></div>
<svg style="left:381px;top:409.0px;" width="8" height="12" viewBox="0 0 8 12"><path d="M1.500 4.500V3.500a2.500 2.500 0 0 1 5 0v1M1.500 7.500v1a2.500 2.500 0 0 0 5 0v-1" fill="none" stroke="#c8c8c8" stroke-width="1.200"/></svg>
<div style="left:7px;top:472px;width:467.2px;height:1px;background:#1e1e1e;"></div>
<svg style="left:13.5px;top:481.5px;" width="10" height="10" viewBox="0 0 10 10"><circle cx="5" cy="5" r="3.800" fill="none" stroke="#8a8a8a" stroke-width="1.100"/></svg>
<span class="t" style="left:30.5px;top:478.0px;line-height:17px;font-size:13px;color:#e0e0e0;transform:scaleX(0.930);transform-origin:0 50%;">Opacity</span>
<div style="left:177px;top:485px;width:186px;height:3px;background:#e4e4e4;border-radius:2px;"></div>
<svg style="left:359.5px;top:480.5px;" width="12" height="12" viewBox="0 0 12 12"><circle cx="6" cy="6" r="5" fill="#7fd0b6" stroke="#2f6f5c" stroke-width="1"/><circle cx="6" cy="6" r="2.200" fill="#a5e4d0"/></svg>
<div class="r3" style="left:377px;top:478.3px;width:94px;height:15.3px;background:#272727;"></div>
<span class="t" style="left:381.0px;top:479.0px;line-height:15px;font-size:11px;color:#777;transform:scaleX(0.930);transform-origin:0 50%;">%</span>
<span class="t" style="left:394.5px;top:478.0px;line-height:17px;font-size:13px;color:#e6e6e6;transform:scaleX(0.891);transform-origin:0 50%;">100.0</span>
<svg style="left:13.5px;top:503.5px;" width="10" height="10" viewBox="0 0 10 10"><circle cx="5" cy="5" r="3.800" fill="none" stroke="#8a8a8a" stroke-width="1.100"/></svg>
<span class="t" style="left:30.5px;top:500.0px;line-height:17px;font-size:13px;color:#e0e0e0;transform:scaleX(0.893);transform-origin:0 50%;">Blend Mode</span>
<div class="r2" style="left:177.5px;top:501.3px;width:193px;height:13.5px;background:#4e4e4e;border:1px solid #3c3c3c;"></div>
<span class="t" style="left:180.0px;top:500.0px;line-height:17px;font-size:13px;color:#f0f0f0;transform:scaleX(0.955);transform-origin:0 50%;">Normal</span>
<svg style="left:358px;top:506px;" width="8" height="5" viewBox="0 0 8 5"><path d="M0.500 0.500 4.0 4.5 7.5 0.500" fill="none" stroke="#d0d0d0" stroke-width="1.1"/></svg>
<span class="t" style="left:30.5px;top:522.0px;line-height:17px;font-size:13px;color:#e0e0e0;transform:scaleX(0.923);transform-origin:0 50%;">Deformers</span>
<div class="r3" style="left:177px;top:522.0px;width:94px;height:15.5px;background:#272727;"></div>
<svg style="left:180px;top:525.5px;" width="10" height="9" viewBox="0 0 10 9"><path d="M0 1h10M0 4.500h10M0 8h10" stroke="#9a9a9a" stroke-width="1.100"/></svg>
<span class="t" style="left:193.5px;top:522.0px;line-height:17px;font-size:13px;color:#a8a8a8;transform:scaleX(0.930);transform-origin:0 50%;">0</span>
<div class="r3" style="left:273px;top:522.0px;width:16px;height:16px;background:#272727;border:1px solid #1c1c1c;"></div>
<svg style="left:276px;top:525.0px;" width="10" height="10" viewBox="0 0 10 10"><path d="M5 0v10M0 5h10" stroke="#f0f0f0" stroke-width="1.600"/></svg>
<span class="t" style="left:30.5px;top:544.0px;line-height:17px;font-size:13px;color:#e0e0e0;transform:scaleX(0.932);transform-origin:0 50%;">Filters</span>
<div class="r3" style="left:177px;top:544.0px;width:94px;height:15.5px;background:#272727;"></div>
<svg style="left:180px;top:547.5px;" width="10" height="9" viewBox="0 0 10 9"><path d="M0 1h10M0 4.500h10M0 8h10" stroke="#9a9a9a" stroke-width="1.100"/></svg>
<span class="t" style="left:193.5px;top:544.0px;line-height:17px;font-size:13px;color:#a8a8a8;transform:scaleX(0.930);transform-origin:0 50%;">0</span>
<div class="r3" style="left:273px;top:544.0px;width:16px;height:16px;background:#272727;border:1px solid #1c1c1c;"></div>
<svg style="left:276px;top:547.0px;" width="10" height="10" viewBox="0 0 10 10"><path d="M5 0v10M0 5h10" stroke="#f0f0f0" stroke-width="1.600"/></svg>
<div class="r3" style="left:398px;top:523px;width:16px;height:16px;background:#2c2c2c;border:1px solid #202020;"></div>
<div class="r3" style="left:416px;top:523px;width:16px;height:16px;background:#2c2c2c;border:1px solid #202020;"></div>
<div class="r3" style="left:434px;top:523px;width:16px;height:16px;background:#2c2c2c;border:1px solid #202020;"></div>
<div class="r3" style="left:454px;top:523px;width:16px;height:16px;background:#2c2c2c;border:1px solid #202020;"></div>
<svg style="left:400px;top:526px;" width="12" height="10" viewBox="0 0 12 10"><path d="M0 1h12M0 5h12M0 9h12" stroke="#e8e8e8" stroke-width="1.800"/></svg>
<svg style="left:417px;top:526px;" width="14" height="10" viewBox="0 0 14 10"><path d="M0 3c2-3 4-3 5 0s3 6 5 3 2-5 4-3" fill="none" stroke="#8fd694" stroke-width="1.400"/><circle cx="3" cy="6" r="1.300" fill="#e8e8e8"/><circle cx="11" cy="7" r="1.300" fill="#e8e8e8"/></svg>
<svg style="left:435px;top:526px;" width="14" height="10" viewBox="0 0 14 10"><path d="M0 5 2 1 5 9 8 1 11 9 14 3" fill="none" stroke="#8fd694" stroke-width="1.400"/></svg>
<svg style="left:456px;top:525px;" width="12" height="12" viewBox="0 0 12 12"><path d="M1 0v11h11" fill="none" stroke="#e0e0e0" stroke-width="1.100"/><path d="M3 9 6 4 7 7 10 3" fill="none" stroke="#e0e0e0" stroke-width="1.100"/><path d="M9 11.500h3v-2z" fill="#35c46f"/></svg>
<div class="r2" style="left:455px;top:545px;width:16px;height:16px;background:#2c2c2c;border:1px solid #d8d8d8;"></div>
<div style="left:459px;top:549px;width:8px;height:8px;background:#e57386;border-radius:2px;"></div>
<svg style="left:13.5px;top:569.5px;" width="10" height="10" viewBox="0 0 10 10"><circle cx="5" cy="5" r="3.800" fill="none" stroke="#8a8a8a" stroke-width="1.100"/></svg>
<span class="t" style="left:30.5px;top:566.0px;line-height:17px;font-size:13px;color:#e0e0e0;transform:scaleX(0.943);transform-origin:0 50%;">Motion Blur</span>
<div class="r2" style="left:177.5px;top:567.3px;width:193px;height:13.5px;background:#4e4e4e;border:1px solid #3c3c3c;"></div>
<span class="t" style="left:180.0px;top:566.0px;line-height:17px;font-size:13px;color:#f0f0f0;transform:scaleX(0.901);transform-origin:0 50%;">None</span>
<svg style="left:358px;top:572px;" width="8" height="5" viewBox="0 0 8 5"><path d="M0.500 0.500 4.0 4.5 7.5 0.500" fill="none" stroke="#d0d0d0" stroke-width="1.1"/></svg>
<div style="left:7px;top:587px;width:467.2px;height:1px;background:#1e1e1e;"></div>
<span class="t" style="left:30.5px;top:595.0px;line-height:17px;font-size:13px;color:#e0e0e0;transform:scaleX(0.921);transform-origin:0 50%;">Primitive Type</span>
<div class="r3" style="left:177px;top:595.3px;width:195px;height:15.7px;background:#272727;"></div>
<div style="left:180px;top:597.5px;width:12px;height:12px;background:#d4d4d4;border-radius:6px;"></div>
<span class="t" style="left:196.5px;top:595.0px;line-height:17px;font-size:13px;color:#e6e6e6;transform:scaleX(0.874);transform-origin:0 50%;">Ellipse</span>
<svg style="left:359px;top:601px;" width="8" height="5" viewBox="0 0 8 5"><path d="M0.500 0.500 4.0 4.5 7.5 0.500" fill="none" stroke="#d0d0d0" stroke-width="1.1"/></svg>
<svg style="left:30px;top:620.5px;" width="10" height="10" viewBox="0 0 10 10"><circle cx="5" cy="5" r="3.800" fill="none" stroke="#8a8a8a" stroke-width="1.100"/></svg>
<span class="t" style="left:46.5px;top:617.0px;line-height:17px;font-size:13px;color:#e0e0e0;transform:scaleX(0.865);transform-origin:0 50%;">Radius</span>
<div class="r3" style="left:177px;top:617.0px;width:94px;height:15.5px;background:#272727;"></div>
<span class="t" style="left:179.5px;top:617.0px;line-height:17px;font-size:13px;color:#777777;transform:scaleX(0.930);transform-origin:0 50%;">W</span>
<span class="t" style="left:194.5px;top:617.0px;line-height:17px;font-size:13px;color:#e6e6e6;transform:scaleX(0.930);transform-origin:0 50%;">100.0</span>
<div class="r3" style="left:277px;top:617.0px;width:94px;height:15.5px;background:#272727;"></div>
<span class="t" style="left:280.5px;top:617.0px;line-height:17px;font-size:13px;color:#777777;transform:scaleX(0.930);transform-origin:0 50%;">H</span>
<span class="t" style="left:294.5px;top:617.0px;line-height:17px;font-size:13px;color:#e6e6e6;transform:scaleX(0.930);transform-origin:0 50%;">100.0</span>
<div class="r3" style="left:377px;top:617.0px;width:16px;height:16px;background:#272727;border:1px solid #1c1c1c;"></div>
<svg style="left:381px;top:619.0px;" width="8" height="12" viewBox="0 0 8 12"><path d="M1.500 4.500V3.500a2.500 2.500 0 0 1 5 0v1M1.500 7.500v1a2.500 2.500 0 0 0 5 0v-1" fill="none" stroke="#c8c8c8" stroke-width="1.200"/></svg>
<svg style="left:30px;top:642.5px;" width="10" height="10" viewBox="0 0 10 10"><circle cx="5" cy="5" r="3.800" fill="none" stroke="#8a8a8a" stroke-width="1.100"/></svg>
<span class="t" style="left:46.5px;top:639.0px;line-height:17px;font-size:13px;color:#e0e0e0;transform:scaleX(0.884);transform-origin:0 50%;">Semicircle</span>
<div class="r3" style="left:177px;top:639.3px;width:16px;height:15.5px;background:#272727;"></div>
<svg style="left:30px;top:664.5px;" width="10" height="10" viewBox="0 0 10 10"><circle cx="5" cy="5" r="3.800" fill="none" stroke="#8a8a8a" stroke-width="1.100"/></svg>
<span class="t" style="left:46.5px;top:661.0px;line-height:17px;font-size:13px;color:#e0e0e0;transform:scaleX(0.895);transform-origin:0 50%;">Bézier</span>
<div class="r3" style="left:177px;top:661.3px;width:16px;height:15.5px;background:#272727;"></div>
<svg style="left:179px;top:663.5px;" width="12" height="12" viewBox="0 0 12 12"><path d="M1 6.500 4.300 10 11 1.500" fill="none" stroke="#35d07f" stroke-width="2"/></svg>
<svg style="left:30px;top:686.5px;" width="10" height="10" viewBox="0 0 10 10"><circle cx="5" cy="5" r="3.800" fill="none" stroke="#8a8a8a" stroke-width="1.100"/></svg>
<span class="t" style="left:46.5px;top:683.0px;line-height:17px;font-size:13px;color:#a0a0a0;transform:scaleX(0.913);transform-origin:0 50%;">Divisions</span>
<div class="r3" style="left:177px;top:683.3px;width:94px;height:15.5px;background:#2b2b2b;"></div>
<span class="t" style="left:182.0px;top:684.0px;line-height:15px;font-size:11px;color:#666;transform:scaleX(0.930);transform-origin:0 50%;">#</span>
<span class="t" style="left:193.5px;top:683.0px;line-height:17px;font-size:13px;color:#b0b0b0;transform:scaleX(0.930);transform-origin:0 50%;">0</span>
<div style="left:494px;top:85px;width:30.2px;height:535px;background:#444444;"></div>
<div style="left:503px;top:89px;width:2px;height:2px;background:#8a8a8a;"></div>
<div style="left:508px;top:89px;width:2px;height:2px;background:#8a8a8a;"></div>
<div style="left:513px;top:89px;width:2px;height:2px;background:#8a8a8a;"></div>
<div class="r4" style="left:495px;top:96px;width:28px;height:28px;background:#232323;"></div>
<svg style="left:498.0px;top:98.5px;" width="22" height="22" viewBox="0 0 22 22"><path d="M6.300 1.800v15l3.400-3.200 2.400 5.400 2.300-1-2.400-5.300h4.600z" fill="none" stroke="#35c46f" stroke-width="1.400" stroke-linejoin="miter"/></svg>
<svg style="left:498.0px;top:128.5px;" width="22" height="22" viewBox="0 0 22 22"><path d="M5.600 1.500 20.300 14.300 5.600 21.700z" fill="#e2e2e2"/></svg>
<svg style="left:498.0px;top:159.0px;" width="22" height="22" viewBox="0 0 22 22"><g transform="rotate(-45 11 11) translate(11 11) scale(1.22) translate(-11 -11.5)"><path d="M11 1 15.500 9.500 13.500 15h-5L6.500 9.500z" fill="#e2e2e2"/><rect x="8.500" y="16" width="5" height="4" fill="#e2e2e2"/><path d="M11 1v8" stroke="#444444" stroke-width="1"/><circle cx="11" cy="10" r="1.300" fill="#444444"/></g></svg>
<svg style="left:498.0px;top:189.0px;" width="22" height="22" viewBox="0 0 22 22"><g transform="rotate(45 11 11)"><rect x="9" y="-2" width="4.400" height="3" rx="1" fill="#e2e2e2"/><rect x="9" y="2" width="4.400" height="14" fill="#e2e2e2"/><path d="M9 17h4.400L11.200 22z" fill="#e2e2e2"/></g></svg>
<svg style="left:498.0px;top:218.5px;" width="22" height="22" viewBox="0 0 22 22"><path d="M1 6.500h13v11H1z M15 10.500 21 7v10l-6-3.500z" fill="#e2e2e2"/><rect x="3" y="3.800" width="7" height="1.600" fill="#e2e2e2"/><circle cx="4.500" cy="9.500" r="1.300" fill="#444444"/></svg>
<svg style="left:498.0px;top:248.5px;" width="22" height="22" viewBox="0 0 22 22"><path d="M3 19 19 3" stroke="#e2e2e2" stroke-width="1.400"/></svg>
<svg style="left:498.0px;top:278.5px;" width="22" height="22" viewBox="0 0 22 22"><path d="M3.500 3.500h15v3.500h-5.500v12h-4V7h-5.500z" fill="#e2e2e2"/></svg>
<svg style="left:498.0px;top:308.5px;" width="22" height="22" viewBox="0 0 22 22"><path d="M3 2.500v10.500l9-5.500z" fill="#e2e2e2"/><path d="M12 4 19 3 20.500 19 3 20 4 14" fill="none" stroke="#e2e2e2" stroke-width="1.300" stroke-dasharray="3.500 2.500"/></svg>
<svg style="left:498.0px;top:338.5px;" width="22" height="22" viewBox="0 0 22 22"><rect x="4" y="4" width="14" height="14" fill="#e2e2e2"/></svg>
<svg style="left:498.0px;top:368.5px;" width="22" height="22" viewBox="0 0 22 22"><circle cx="11" cy="11" r="8" fill="#e2e2e2"/></svg>
<svg style="left:498.0px;top:398.5px;" width="22" height="22" viewBox="0 0 22 22"><path d="M11 2.500 19.500 8.800 16.300 19H5.700L2.500 8.800z" fill="#e2e2e2"/></svg>
<svg style="left:498.0px;top:428.5px;" width="22" height="22" viewBox="0 0 22 22"><path d="M11 2l2.500 6.200 6.500 0.400-5 4.200 1.600 6.400L11 15.700 5.400 19.200 7 12.800 2 8.600l6.500-0.400z" fill="#e2e2e2"/></svg>
<svg style="left:498.0px;top:458.5px;" width="22" height="22" viewBox="0 0 22 22"><path d="M16.500 12.500a6 6 0 1 0-6 6" fill="none" stroke="#e2e2e2" stroke-width="3"/></svg>
<svg style="left:498.0px;top:488.5px;" width="22" height="22" viewBox="0 0 22 22"><path d="M11 2.500c0.800 5 3.500 7.700 8.500 8.500-5 0.800-7.700 3.500-8.500 8.500-0.800-5-3.500-7.700-8.500-8.500 5-0.800 7.700-3.500 8.500-8.500z" fill="#e2e2e2"/></svg>
<svg style="left:498.0px;top:518.5px;" width="22" height="22" viewBox="0 0 22 22"><rect x="9.300" y="1.500" width="3.400" height="4.500" rx="0.800" transform="rotate(0 11 11)" fill="#e2e2e2"/><rect x="9.300" y="1.500" width="3.400" height="4.500" rx="0.800" transform="rotate(45 11 11)" fill="#e2e2e2"/><rect x="9.300" y="1.500" width="3.400" height="4.500" rx="0.800" transform="rotate(90 11 11)" fill="#e2e2e2"/><rect x="9.300" y="1.500" width="3.400" height="4.500" rx="0.800" transform="rotate(135 11 11)" fill="#e2e2e2"/><rect x="9.300" y="1.500" width="3.400" height="4.500" rx="0.800" transform="rotate(180 11 11)" fill="#e2e2e2"/><rect x="9.300" y="1.500" width="3.400" height="4.500" rx="0.800" transform="rotate(225 11 11)" fill="#e2e2e2"/><rect x="9.300" y="1.500" width="3.400" height="4.500" rx="0.800" transform="rotate(270 11 11)" fill="#e2e2e2"/><rect x="9.300" y="1.500" width="3.400" height="4.500" rx="0.800" transform="rotate(315 11 11)" fill="#e2e2e2"/><circle cx="11" cy="11" r="5.200" fill="none" stroke="#e2e2e2" stroke-width="3.200"/></svg>
<svg style="left:498.0px;top:548.5px;" width="22" height="22" viewBox="0 0 22 22"><path d="M1 11 6.500 6v3.500h9V6L21 11l-5.500 5v-3.500h-9V16z" fill="#e2e2e2"/></svg>
<svg style="left:503px;top:604px;" width="13" height="11" viewBox="0 0 13 11"><path d="M0.500 0.500 5.500 5.500 0.500 10.500M6.500 0.500 11.500 5.500 6.500 10.500" fill="none" stroke="#c8c8c8" stroke-width="1.100"/></svg>
<div style="left:530px;top:85px;width:97px;height:22px;background:#444444;border-radius:3px 3px 0 0;"></div>
<span class="t" style="left:535.0px;top:88.0px;line-height:17px;font-size:13px;color:#e6e6e6;transform:scaleX(0.931);transform-origin:0 50%;">duplicator blend</span>
<div style="left:530px;top:107px;width:1057px;height:513px;background:#444444;"></div>
<div style="left:550px;top:127px;width:1037px;height:471px;background:#000000;"></div>
<div style="left:671.3px;top:138.8px;width:793.8px;height:446.4px;background:#1b1b1b;"></div>
<span class="t" style="left:535.5px;top:109.5px;line-height:15px;font-size:11px;color:#b8b8b8;transform:scaleX(0.860);transform-origin:0 50%;">px</span>
<svg style="left:0px;top:0px;" width="1920" height="1029" viewBox="0 0 1920 1029"><path d="M560.1 123.5V127" stroke="#9a9a9a" stroke-width="1"/><path d="M572.5 118.5V127" stroke="#9a9a9a" stroke-width="1"/><path d="M584.9 123.5V127" stroke="#9a9a9a" stroke-width="1"/><path d="M597.3 123.5V127" stroke="#9a9a9a" stroke-width="1"/><path d="M609.7 123.5V127" stroke="#9a9a9a" stroke-width="1"/><path d="M622.1 123.5V127" stroke="#9a9a9a" stroke-width="1"/><path d="M634.5 118.5V127" stroke="#9a9a9a" stroke-width="1"/><path d="M646.9 123.5V127" stroke="#9a9a9a" stroke-width="1"/><path d="M659.3 123.5V127" stroke="#9a9a9a" stroke-width="1"/><path d="M671.7 123.5V127" stroke="#9a9a9a" stroke-width="1"/><path d="M684.1 123.5V127" stroke="#9a9a9a" stroke-width="1"/><path d="M696.5 118.5V127" stroke="#9a9a9a" stroke-width="1"/><path d="M708.9 123.5V127" stroke="#9a9a9a" stroke-width="1"/><path d="M721.3 123.5V127" stroke="#9a9a9a" stroke-width="1"/><path d="M733.7 123.5V127" stroke="#9a9a9a" stroke-width="1"/><path d="M746.1 123.5V127" stroke="#9a9a9a" stroke-width="1"/><path d="M758.5 118.5V127" stroke="#9a9a9a" stroke-width="1"/><path d="M770.9 123.5V127" stroke="#9a9a9a" stroke-width="1"/><path d="M783.3 123.5V127" stroke="#9a9a9a" stroke-width="1"/><path d="M795.7 123.5V127" stroke="#9a9a9a" stroke-width="1"/><path d="M808.1 123.5V127" stroke="#9a9a9a" stroke-width="1"/><path d="M820.5 118.5V127" stroke="#9a9a9a" stroke-width="1"/><path d="M832.9 123.5V127" stroke="#9a9a9a" stroke-width="1"/><path d="M845.3 123.5V127" stroke="#9a9a9a" stroke-width="1"/><path d="M857.7 123.5V127" stroke="#9a9a9a" stroke-width="1"/><path d="M870.1 123.5V127" stroke="#9a9a9a" stroke-width="1"/><path d="M882.5 118.5V127" stroke="#9a9a9a" stroke-width="1"/><path d="M894.9 123.5V127" stroke="#9a9a9a" stroke-width="1"/><path d="M907.3 123.5V127" stroke="#9a9a9a" stroke-width="1"/><path d="M919.7 123.5V127" stroke="#9a9a9a" stroke-width="1"/><path d="M932.1 123.5V127" stroke="#9a9a9a" stroke-width="1"/><path d="M944.5 118.5V127" stroke="#9a9a9a" stroke-width="1"/><path d="M956.9 123.5V127" stroke="#9a9a9a" stroke-width="1"/><path d="M969.3 123.5V127" stroke="#9a9a9a" stroke-width="1"/><path d="M981.7 123.5V127" stroke="#9a9a9a" stroke-width="1"/><path d="M994.1 123.5V127" stroke="#9a9a9a" stroke-width="1"/><path d="M1006.5 118.5V127" stroke="#9a9a9a" stroke-width="1"/><path d="M1018.9 123.5V127" stroke="#9a9a9a" stroke-width="1"/><path d="M1031.3 123.5V127" stroke="#9a9a9a" stroke-width="1"/><path d="M1043.7 123.5V127" stroke="#9a9a9a" stroke-width="1"/><path d="M1056.1 123.5V127" stroke="#9a9a9a" stroke-width="1"/><path d="M1068.5 118.5V127" stroke="#9a9a9a" stroke-width="1"/><path d="M1080.9 123.5V127" stroke="#9a9a9a" stroke-width="1"/><path d="M1093.3 123.5V127" stroke="#9a9a9a" stroke-width="1"/><path d="M1105.7 123.5V127" stroke="#9a9a9a" stroke-width="1"/><path d="M1118.1 123.5V127" stroke="#9a9a9a" stroke-width="1"/><path d="M1130.5 118.5V127" stroke="#9a9a9a" stroke-width="1"/><path d="M1142.9 123.5V127" stroke="#9a9a9a" stroke-width="1"/><path d="M1155.3 123.5V127" stroke="#9a9a9a" stroke-width="1"/><path d="M1167.7 123.5V127" stroke="#9a9a9a" stroke-width="1"/><path d="M1180.1 123.5V127" stroke="#9a9a9a" stroke-width="1"/><path d="M1192.5 118.5V127" stroke="#9a9a9a" stroke-width="1"/><path d="M1204.9 123.5V127" stroke="#9a9a9a" stroke-width="1"/><path d="M1217.3 123.5V127" stroke="#9a9a9a" stroke-width="1"/><path d="M1229.7 123.5V127" stroke="#9a9a9a" stroke-width="1"/><path d="M1242.1 123.5V127" stroke="#9a9a9a" stroke-width="1"/><path d="M1254.5 118.5V127" stroke="#9a9a9a" stroke-width="1"/><path d="M1266.9 123.5V127" stroke="#9a9a9a" stroke-width="1"/><path d="M1279.3 123.5V127" stroke="#9a9a9a" stroke-width="1"/><path d="M1291.7 123.5V127" stroke="#9a9a9a" stroke-width="1"/><path d="M1304.1 123.5V127" stroke="#9a9a9a" stroke-width="1"/><path d="M1316.5 118.5V127" stroke="#9a9a9a" stroke-width="1"/><path d="M1328.9 123.5V127" stroke="#9a9a9a" stroke-width="1"/><path d="M1341.3 123.5V127" stroke="#9a9a9a" stroke-width="1"/><path d="M1353.7 123.5V127" stroke="#9a9a9a" stroke-width="1"/><path d="M1366.1 123.5V127" stroke="#9a9a9a" stroke-width="1"/><path d="M1378.5 118.5V127" stroke="#9a9a9a" stroke-width="1"/><path d="M1390.9 123.5V127" stroke="#9a9a9a" stroke-width="1"/><path d="M1403.3 123.5V127" stroke="#9a9a9a" stroke-width="1"/><path d="M1415.7 123.5V127" stroke="#9a9a9a" stroke-width="1"/><path d="M1428.1 123.5V127" stroke="#9a9a9a" stroke-width="1"/><path d="M1440.5 118.5V127" stroke="#9a9a9a" stroke-width="1"/><path d="M1452.9 123.5V127" stroke="#9a9a9a" stroke-width="1"/><path d="M1465.3 123.5V127" stroke="#9a9a9a" stroke-width="1"/><path d="M1477.7 123.5V127" stroke="#9a9a9a" stroke-width="1"/><path d="M1490.1 123.5V127" stroke="#9a9a9a" stroke-width="1"/><path d="M1502.5 118.5V127" stroke="#9a9a9a" stroke-width="1"/><path d="M1514.9 123.5V127" stroke="#9a9a9a" stroke-width="1"/><path d="M1527.3 123.5V127" stroke="#9a9a9a" stroke-width="1"/><path d="M1539.7 123.5V127" stroke="#9a9a9a" stroke-width="1"/><path d="M1552.1 123.5V127" stroke="#9a9a9a" stroke-width="1"/><path d="M1564.5 118.5V127" stroke="#9a9a9a" stroke-width="1"/><path d="M1576.9 123.5V127" stroke="#9a9a9a" stroke-width="1"/><path d="M545.5 138.8H550" stroke="#9a9a9a" stroke-width="1"/><path d="M545.5 151.2H550" stroke="#9a9a9a" stroke-width="1"/><path d="M545.5 163.6H550" stroke="#9a9a9a" stroke-width="1"/><path d="M541.5 176.0H550" stroke="#9a9a9a" stroke-width="1"/><path d="M545.5 188.4H550" stroke="#9a9a9a" stroke-width="1"/><path d="M545.5 200.8H550" stroke="#9a9a9a" stroke-width="1"/><path d="M545.5 213.2H550" stroke="#9a9a9a" stroke-width="1"/><path d="M545.5 225.6H550" stroke="#9a9a9a" stroke-width="1"/><path d="M541.5 238.0H550" stroke="#9a9a9a" stroke-width="1"/><path d="M545.5 250.4H550" stroke="#9a9a9a" stroke-width="1"/><path d="M545.5 262.8H550" stroke="#9a9a9a" stroke-width="1"/><path d="M545.5 275.2H550" stroke="#9a9a9a" stroke-width="1"/><path d="M545.5 287.6H550" stroke="#9a9a9a" stroke-width="1"/><path d="M541.5 300.0H550" stroke="#9a9a9a" stroke-width="1"/><path d="M545.5 312.4H550" stroke="#9a9a9a" stroke-width="1"/><path d="M545.5 324.8H550" stroke="#9a9a9a" stroke-width="1"/><path d="M545.5 337.2H550" stroke="#9a9a9a" stroke-width="1"/><path d="M545.5 349.6H550" stroke="#9a9a9a" stroke-width="1"/><path d="M541.5 362.0H550" stroke="#9a9a9a" stroke-width="1"/><path d="M545.5 374.4H550" stroke="#9a9a9a" stroke-width="1"/><path d="M545.5 386.8H550" stroke="#9a9a9a" stroke-width="1"/><path d="M545.5 399.2H550" stroke="#9a9a9a" stroke-width="1"/><path d="M545.5 411.6H550" stroke="#9a9a9a" stroke-width="1"/><path d="M541.5 424.0H550" stroke="#9a9a9a" stroke-width="1"/><path d="M545.5 436.4H550" stroke="#9a9a9a" stroke-width="1"/><path d="M545.5 448.8H550" stroke="#9a9a9a" stroke-width="1"/><path d="M545.5 461.2H550" stroke="#9a9a9a" stroke-width="1"/><path d="M545.5 473.6H550" stroke="#9a9a9a" stroke-width="1"/><path d="M541.5 486.0H550" stroke="#9a9a9a" stroke-width="1"/><path d="M545.5 498.4H550" stroke="#9a9a9a" stroke-width="1"/><path d="M545.5 510.8H550" stroke="#9a9a9a" stroke-width="1"/><path d="M545.5 523.2H550" stroke="#9a9a9a" stroke-width="1"/><path d="M545.5 535.6H550" stroke="#9a9a9a" stroke-width="1"/><path d="M541.5 548.0H550" stroke="#9a9a9a" stroke-width="1"/><path d="M545.5 560.4H550" stroke="#9a9a9a" stroke-width="1"/><path d="M545.5 572.8H550" stroke="#9a9a9a" stroke-width="1"/><path d="M545.5 585.2H550" stroke="#9a9a9a" stroke-width="1"/></svg>
<span class="t" style="left:559.4px;top:107.0px;line-height:15px;font-size:11px;color:#bdbdbd;transform:scaleX(0.970);transform-origin:50% 50%;">-1200</span>
<span class="t" style="left:621.4px;top:107.0px;line-height:15px;font-size:11px;color:#bdbdbd;transform:scaleX(0.970);transform-origin:50% 50%;">-1050</span>
<span class="t" style="left:686.5px;top:107.0px;line-height:15px;font-size:11px;color:#bdbdbd;transform:scaleX(0.970);transform-origin:50% 50%;">-900</span>
<span class="t" style="left:748.5px;top:107.0px;line-height:15px;font-size:11px;color:#bdbdbd;transform:scaleX(0.970);transform-origin:50% 50%;">-750</span>
<span class="t" style="left:810.5px;top:107.0px;line-height:15px;font-size:11px;color:#bdbdbd;transform:scaleX(0.970);transform-origin:50% 50%;">-600</span>
<span class="t" style="left:872.5px;top:107.0px;line-height:15px;font-size:11px;color:#bdbdbd;transform:scaleX(0.970);transform-origin:50% 50%;">-450</span>
<span class="t" style="left:934.5px;top:107.0px;line-height:15px;font-size:11px;color:#bdbdbd;transform:scaleX(0.970);transform-origin:50% 50%;">-300</span>
<span class="t" style="left:996.5px;top:107.0px;line-height:15px;font-size:11px;color:#bdbdbd;transform:scaleX(0.970);transform-origin:50% 50%;">-150</span>
<span class="t" style="left:1066.4px;top:107.0px;line-height:15px;font-size:11px;color:#bdbdbd;transform:scaleX(0.970);transform-origin:50% 50%;">0</span>
<span class="t" style="left:1122.3px;top:107.0px;line-height:15px;font-size:11px;color:#bdbdbd;transform:scaleX(0.970);transform-origin:50% 50%;">150</span>
<span class="t" style="left:1184.3px;top:107.0px;line-height:15px;font-size:11px;color:#bdbdbd;transform:scaleX(0.970);transform-origin:50% 50%;">300</span>
<span class="t" style="left:1246.3px;top:107.0px;line-height:15px;font-size:11px;color:#bdbdbd;transform:scaleX(0.970);transform-origin:50% 50%;">450</span>
<span class="t" style="left:1308.3px;top:107.0px;line-height:15px;font-size:11px;color:#bdbdbd;transform:scaleX(0.970);transform-origin:50% 50%;">600</span>
<span class="t" style="left:1370.3px;top:107.0px;line-height:15px;font-size:11px;color:#bdbdbd;transform:scaleX(0.970);transform-origin:50% 50%;">750</span>
<span class="t" style="left:1432.3px;top:107.0px;line-height:15px;font-size:11px;color:#bdbdbd;transform:scaleX(0.970);transform-origin:50% 50%;">900</span>
<span class="t" style="left:1491.2px;top:107.0px;line-height:15px;font-size:11px;color:#bdbdbd;transform:scaleX(0.970);transform-origin:50% 50%;">1050</span>
<span class="t" style="left:1553.2px;top:107.0px;line-height:15px;font-size:11px;color:#bdbdbd;transform:scaleX(0.970);transform-origin:50% 50%;">1200</span>
<span class="t" style="left:536.5px;top:176.0px;font-size:11px;line-height:12px;color:#bdbdbd;transform:translate(-50%,-50%) rotate(-90deg) scaleX(0.97);">450</span>
<span class="t" style="left:536.5px;top:238.0px;font-size:11px;line-height:12px;color:#bdbdbd;transform:translate(-50%,-50%) rotate(-90deg) scaleX(0.97);">300</span>
<span class="t" style="left:536.5px;top:300.0px;font-size:11px;line-height:12px;color:#bdbdbd;transform:translate(-50%,-50%) rotate(-90deg) scaleX(0.97);">150</span>
<span class="t" style="left:536.5px;top:362.0px;font-size:11px;line-height:12px;color:#bdbdbd;transform:translate(-50%,-50%) rotate(-90deg) scaleX(0.97);">0</span>
<span class="t" style="left:536.5px;top:424.0px;font-size:11px;line-height:12px;color:#bdbdbd;transform:translate(-50%,-50%) rotate(-90deg) scaleX(0.97);">-150</span>
<span class="t" style="left:536.5px;top:486.0px;font-size:11px;line-height:12px;color:#bdbdbd;transform:translate(-50%,-50%) rotate(-90deg) scaleX(0.97);">-300</span>
<span class="t" style="left:536.5px;top:548.0px;font-size:11px;line-height:12px;color:#bdbdbd;transform:translate(-50%,-50%) rotate(-90deg) scaleX(0.97);">-450</span>
<svg style="left:0px;top:0px;" width="1920" height="1029" viewBox="0 0 1920 1029"><circle cx="1068.5" cy="362" r="41.300" fill="#cdcdcd"/><rect x="1027" y="320.500" width="83" height="83" fill="none" stroke="#35c46f" stroke-width="1"/><rect x="1024" y="317.5" width="6" height="6" fill="#ffffff" stroke="#35c46f" stroke-width="1"/><rect x="1024" y="400.5" width="6" height="6" fill="#ffffff" stroke="#35c46f" stroke-width="1"/><rect x="1107" y="317.5" width="6" height="6" fill="#ffffff" stroke="#35c46f" stroke-width="1"/><rect x="1107" y="400.5" width="6" height="6" fill="#ffffff" stroke="#35c46f" stroke-width="1"/><circle cx="1068.5" cy="362" r="3.500" fill="none" stroke="#3a3a3a" stroke-width="0.9"/><circle cx="1068.5" cy="362" r="1" fill="#3a3a3a"/><rect x="1027.500" y="305.500" width="8.500" height="8.500" fill="#ffe36e"/></svg>
<span class="t" style="left:1038.5px;top:302.0px;line-height:16px;font-size:12px;color:#ffffff;transform:scaleX(1.005);transform-origin:0 50%;">inputShape</span>
<span class="t" style="left:569.3px;top:499.5px;line-height:16px;font-size:12px;color:#f0f0f0;transform:scaleX(0.944);transform-origin:0 50%;">Hold S</span>
<span class="t" style="left:605.7px;top:499.5px;line-height:16px;font-size:12px;color:#4e4e4e;transform:scaleX(0.980);transform-origin:0 50%;">Direct Layer Selection</span>
<span class="t" style="left:569.3px;top:513.5px;line-height:16px;font-size:12px;color:#f0f0f0;transform:scaleX(0.903);transform-origin:0 50%;">Space</span>
<span class="t" style="left:603.3px;top:513.5px;line-height:16px;font-size:12px;color:#4e4e4e;transform:scaleX(0.964);transform-origin:0 50%;">Play/ Stop</span>
<span class="t" style="left:569.3px;top:527.5px;line-height:16px;font-size:12px;color:#f0f0f0;transform:scaleX(0.935);transform-origin:0 50%;">Space + click + drag</span>
<span class="t" style="left:674.0px;top:527.5px;line-height:16px;font-size:12px;color:#4e4e4e;transform:scaleX(0.904);transform-origin:0 50%;">Pan</span>
<span class="t" style="left:569.3px;top:541.5px;line-height:16px;font-size:12px;color:#f0f0f0;transform:scaleX(0.973);transform-origin:0 50%;">Alt + click + drag</span>
<span class="t" style="left:658.7px;top:541.5px;line-height:16px;font-size:12px;color:#4e4e4e;">Move Pivot Point</span>
<span class="t" style="left:569.3px;top:555.5px;line-height:16px;font-size:12px;color:#f0f0f0;transform:scaleX(1.029);transform-origin:0 50%;">Shift</span>
<span class="t" style="left:596.7px;top:555.5px;line-height:16px;font-size:12px;color:#4e4e4e;transform:scaleX(0.941);transform-origin:0 50%;">Enable Snapping</span>
<span class="t" style="left:569.3px;top:575.5px;line-height:16px;font-size:12px;color:#f0f0f0;transform:scaleX(1.021);transform-origin:0 50%;">00:00:04:07</span>
<span class="t" style="left:997.7px;top:575.5px;line-height:16px;font-size:12px;color:#f0f0f0;transform:scaleX(1.021);transform-origin:0 50%;">Viewport Quality: High</span>
<div class="r3" style="left:535.2px;top:601.3px;width:77.5px;height:15.4px;background:#2b2b2b;"></div>
<span class="t" style="left:538.5px;top:601.0px;line-height:17px;font-size:13px;color:#e6e6e6;transform:scaleX(0.864);transform-origin:0 50%;">41%</span>
<svg style="left:601px;top:607px;" width="8" height="5" viewBox="0 0 8 5"><path d="M0.500 0.500 4 4.500 7.500 0.500" fill="none" stroke="#d0d0d0" stroke-width="1.1"/></svg>
<div class="r4" style="left:866px;top:599.5px;width:100px;height:19.2px;background:#2d2d2d;border:1px solid #333333;"></div>
<div style="left:885.2px;top:600.5px;width:1px;height:17.2px;background:#3e3e3e;"></div>
<div style="left:905.2px;top:600.5px;width:1px;height:17.2px;background:#3e3e3e;"></div>
<div style="left:925.2px;top:600.5px;width:1px;height:17.2px;background:#3e3e3e;"></div>
<div style="left:945.2px;top:600.5px;width:1px;height:17.2px;background:#3e3e3e;"></div>
<svg style="left:868.8px;top:602.5px;" width="14" height="14" viewBox="0 0 14 14"><path d="M2.500 2v10" stroke="#e2e2e2" stroke-width="1.600"/><path d="M12 2v10L4.500 7z" fill="#e2e2e2"/></svg>
<svg style="left:888.8px;top:602.5px;" width="14" height="14" viewBox="0 0 14 14"><path d="M8.500 2v10L1.500 7z" fill="#e2e2e2"/><path d="M11 2v10" stroke="#e2e2e2" stroke-width="1.600"/></svg>
<svg style="left:908.8px;top:602.5px;" width="14" height="14" viewBox="0 0 14 14"><path d="M3 1.500v11L12.500 7z" fill="#e2e2e2"/></svg>
<svg style="left:928.8px;top:602.5px;" width="14" height="14" viewBox="0 0 14 14"><path d="M3 2v10" stroke="#e2e2e2" stroke-width="1.600"/><path d="M5.500 2v10l7-5z" fill="#e2e2e2"/></svg>
<svg style="left:948.8px;top:602.5px;" width="14" height="14" viewBox="0 0 14 14"><path d="M2 2v10l7.500-5z" fill="#e2e2e2"/><path d="M11.500 2v10" stroke="#e2e2e2" stroke-width="1.600"/></svg>
<div class="r4" style="left:971px;top:599.5px;width:20px;height:19.2px;background:#2d2d2d;border:1px solid #333333;"></div>
<svg style="left:974px;top:603px;" width="14" height="13" viewBox="0 0 14 13"><rect x="1" y="4" width="12" height="7.500" rx="1.500" fill="none" stroke="#e2e2e2" stroke-width="1.400"/><path d="M7 0.500 11 3.500 7 6.500z" fill="#e2e2e2"/><rect x="5" y="2.500" width="3" height="2.500" fill="#2c2c2c"/><path d="M7 0.500 11 3.500 7 6.500z" fill="#e2e2e2"/></svg>
<div class="r4" style="left:1232px;top:599.5px;width:37px;height:19.2px;background:#2d2d2d;border:1px solid #333333;"></div>
<svg style="left:1233.5px;top:605px;" width="14" height="9" viewBox="0 0 14 9"><path d="M0 4.500 3.500 0H14v9H3.500z" fill="#dcdcdc"/><circle cx="4" cy="4.500" r="1.300" fill="#2c2c2c"/></svg>
<span class="t" style="left:1261.0px;top:601.0px;line-height:17px;font-size:13px;color:#7d7d7d;transform:scaleX(0.930);transform-origin:0 50%;">0</span>
<div class="r4" style="left:1272.5px;top:599.5px;width:30.5px;height:19.2px;background:#2d2d2d;border:1px solid #333333;"></div>
<div style="left:1291.0px;top:600.5px;width:1px;height:17.2px;background:#3e3e3e;"></div>
<svg style="left:1294.5px;top:606px;" width="6" height="7" viewBox="0 0 6 7"><path d="M0.500 0.500v6L5.500 3.500z" fill="none" stroke="#8a8a8a" stroke-width="0.9"/></svg>
<svg style="left:1275.5px;top:603.5px;" width="14" height="12" viewBox="0 0 14 12"><path d="M0.500 4h2.500L7 0.500v11L3 8H0.500z" fill="#35c46f"/><path d="M8.800 3.500a3.500 3.500 0 0 1 0 5M10.800 1.500a6 6 0 0 1 0 9" fill="none" stroke="#35c46f" stroke-width="1.300"/></svg>
<div class="r4" style="left:1307.5px;top:599.5px;width:30.5px;height:19.2px;background:#2d2d2d;border:1px solid #333333;"></div>
<div style="left:1325.5px;top:600.5px;width:1px;height:17.2px;background:#3e3e3e;"></div>
<svg style="left:1329px;top:606px;" width="6" height="7" viewBox="0 0 6 7"><path d="M0.500 0.500v6L5.500 3.500z" fill="none" stroke="#8a8a8a" stroke-width="0.9"/></svg>
<svg style="left:1310.5px;top:603.5px;" width="13" height="12" viewBox="0 0 13 12"><path d="M2.500 11.500 1.200 6.500A4.500 4.500 0 0 1 9.500 3.500l2.500 3" fill="none" stroke="#e2e2e2" stroke-width="2.400"/></svg>
<div class="r4" style="left:1342px;top:599.5px;width:31px;height:19.2px;background:#2d2d2d;border:1px solid #333333;"></div>
<div style="left:1360.5px;top:600.5px;width:1px;height:17.2px;background:#3e3e3e;"></div>
<svg style="left:1364px;top:606px;" width="6" height="7" viewBox="0 0 6 7"><path d="M0.500 0.500v6L5.500 3.500z" fill="none" stroke="#8a8a8a" stroke-width="0.9"/></svg>
<svg style="left:1345px;top:603px;" width="13" height="13" viewBox="0 0 13 13"><path d="M4 0v13M9 0v13M0 4h13M0 9h13" stroke="#e2e2e2" stroke-width="1.200"/></svg>
<div class="r4" style="left:1377.5px;top:599.5px;width:19px;height:19.2px;background:#2d2d2d;border:1px solid #333333;"></div>
<svg style="left:1380px;top:604px;" width="14" height="11" viewBox="0 0 14 11"><rect x="0" y="0" width="4" height="4.500" fill="#35c46f"/><rect x="0" y="6" width="4" height="5" fill="#35c46f"/><rect x="5.500" y="0.600" width="8" height="5" fill="none" stroke="#35c46f" stroke-width="1.200"/><rect x="5" y="7.500" width="9" height="3.500" fill="#35c46f"/></svg>
<div class="r4" style="left:1400px;top:599.5px;width:19.5px;height:19.2px;background:#2d2d2d;border:1px solid #333333;"></div>
<svg style="left:1403px;top:604.5px;" width="14" height="10" viewBox="0 0 14 10"><path d="M0.500 0.500 4.500 5 0.500 9.500M5 0.500 9 5 5 9.500M9.500 0.500 13.500 5 9.500 9.500" fill="none" stroke="#e2e2e2" stroke-width="1.400"/></svg>
<div class="r4" style="left:1423px;top:599.5px;width:30.5px;height:19.2px;background:#2d2d2d;border:1px solid #333333;"></div>
<div style="left:1441.5px;top:600.5px;width:1px;height:17.2px;background:#3e3e3e;"></div>
<svg style="left:1445px;top:606px;" width="6" height="7" viewBox="0 0 6 7"><path d="M0.500 0.500v6L5.500 3.500z" fill="none" stroke="#8a8a8a" stroke-width="0.9"/></svg>
<svg style="left:1425.5px;top:603.5px;" width="14" height="12" viewBox="0 0 14 12"><rect x="0.600" y="0.600" width="12.800" height="8.800" fill="none" stroke="#e2e2e2" stroke-width="1.200"/><rect x="0" y="10" width="14" height="2" fill="#e2e2e2"/></svg>
<div class="r4" style="left:1458.5px;top:599.5px;width:30.5px;height:19.2px;background:#2d2d2d;border:1px solid #333333;"></div>
<div style="left:1476.5px;top:600.5px;width:1px;height:17.2px;background:#3e3e3e;"></div>
<svg style="left:1480px;top:606px;" width="6" height="7" viewBox="0 0 6 7"><path d="M0.500 0.500v6L5.500 3.500z" fill="none" stroke="#8a8a8a" stroke-width="0.9"/></svg>
<svg style="left:1461px;top:603.5px;" width="14" height="12" viewBox="0 0 14 12"><rect x="0.500" y="0.500" width="8" height="6" fill="none" stroke="#9a9a9a" stroke-width="1"/><path d="M3 8.500h8v-6M5.500 11h8V5" fill="none" stroke="#9a9a9a" stroke-width="1"/></svg>
<div class="r4" style="left:1493px;top:599.5px;width:31px;height:19.2px;background:#2d2d2d;border:1px solid #333333;"></div>
<div style="left:1511.5px;top:600.5px;width:1px;height:17.2px;background:#3e3e3e;"></div>
<svg style="left:1515px;top:606px;" width="6" height="7" viewBox="0 0 6 7"><path d="M0.500 0.500v6L5.500 3.500z" fill="none" stroke="#8a8a8a" stroke-width="0.9"/></svg>
<svg style="left:1495.5px;top:603px;" width="14" height="13" viewBox="0 0 14 13"><rect x="0" y="0" width="9" height="9" fill="#bdbdbd"/><rect x="5.500" y="4.500" width="8" height="8" fill="#2c2c2c" stroke="#e2e2e2" stroke-width="1"/></svg>
<div class="r4" style="left:1528.5px;top:599.5px;width:30.5px;height:19.2px;background:#2d2d2d;border:1px solid #333333;"></div>
<div style="left:1546.5px;top:600.5px;width:1px;height:17.2px;background:#3e3e3e;"></div>
<svg style="left:1550px;top:606px;" width="6" height="7" viewBox="0 0 6 7"><path d="M0.500 0.500v6L5.500 3.500z" fill="none" stroke="#8a8a8a" stroke-width="0.9"/></svg>
<svg style="left:1531.5px;top:603.5px;" width="12" height="12" viewBox="0 0 12 12"><rect x="0" y="0" width="3" height="3" fill="#35c46f"/><rect x="0" y="6" width="3" height="3" fill="#35c46f"/><rect x="3" y="3" width="3" height="3" fill="#35c46f"/><rect x="3" y="9" width="3" height="3" fill="#35c46f"/><rect x="6" y="0" width="3" height="3" fill="#35c46f"/><rect x="6" y="6" width="3" height="3" fill="#35c46f"/><rect x="9" y="3" width="3" height="3" fill="#35c46f"/><rect x="9" y="9" width="3" height="3" fill="#35c46f"/></svg>
<div class="r4" style="left:1563.5px;top:599.5px;width:19px;height:19.2px;background:#2d2d2d;border:1px solid #333333;"></div>
<svg style="left:1566px;top:602.5px;" width="14" height="14" viewBox="0 0 14 14"><rect x="5.700" y="0" width="2.600" height="3.500" rx="0.600" transform="rotate(0 7 7)" fill="#e2e2e2"/><rect x="5.700" y="0" width="2.600" height="3.500" rx="0.600" transform="rotate(45 7 7)" fill="#e2e2e2"/><rect x="5.700" y="0" width="2.600" height="3.500" rx="0.600" transform="rotate(90 7 7)" fill="#e2e2e2"/><rect x="5.700" y="0" width="2.600" height="3.500" rx="0.600" transform="rotate(135 7 7)" fill="#e2e2e2"/><rect x="5.700" y="0" width="2.600" height="3.500" rx="0.600" transform="rotate(180 7 7)" fill="#e2e2e2"/><rect x="5.700" y="0" width="2.600" height="3.500" rx="0.600" transform="rotate(225 7 7)" fill="#e2e2e2"/><rect x="5.700" y="0" width="2.600" height="3.500" rx="0.600" transform="rotate(270 7 7)" fill="#e2e2e2"/><rect x="5.700" y="0" width="2.600" height="3.500" rx="0.600" transform="rotate(315 7 7)" fill="#e2e2e2"/><circle cx="7" cy="7" r="3.600" fill="none" stroke="#e2e2e2" stroke-width="2.300"/></svg>
<div style="left:1593.5px;top:107px;width:320.5px;height:416.8px;background:#444444;"></div>
<div style="left:1902px;top:109px;width:9.5px;height:366.6px;background:#5a5a5a;border-radius:5px;"></div>
<div style="left:1645.8px;top:119.3px;width:200px;height:200px;border-radius:50%;background:conic-gradient(from 90deg,#ff0000,#ff00ff,#0000ff,#00ffff,#00ff00,#ffff00,#ff0000);"></div>
<div style="left:1670.8px;top:144.3px;width:150px;height:150px;background:#444444;border-radius:50%;"></div>
<div style="left:1701.7px;top:175.7px;width:90.6px;height:90.6px;background:linear-gradient(to right,#000,rgba(0,0,0,0)),linear-gradient(to bottom,#fff,#f00);"></div>
<svg style="left:1725px;top:165px;" width="24" height="24" viewBox="0 0 24 24"><circle cx="12" cy="10.700" r="5.500" fill="none" stroke="#e8e8e8" stroke-width="1.200"/></svg>
<svg style="left:1821px;top:208px;" width="24" height="24" viewBox="0 0 24 24"><circle cx="11.700" cy="12" r="5.500" fill="#ff0000" stroke="#f4f4f4" stroke-width="1.200"/></svg>
<div class="r3" style="left:1600px;top:333px;width:22px;height:22px;background:#646464;"></div>
<span class="t" style="left:1625.0px;top:336.0px;line-height:17px;font-size:13px;color:#e6e6e6;transform:scaleX(0.893);transform-origin:0 50%;">Dim Gray</span>
<div class="r3" style="left:1871.5px;top:333px;width:21.5px;height:22px;background:#2a2a2a;border:1px solid #1e1e1e;"></div>
<svg style="left:1875.5px;top:337px;" width="14" height="14" viewBox="0 0 14 14"><path d="M1 13l1.200-3 5.500-5.500 1.800 1.800L4 11.800z" fill="none" stroke="#e2e2e2" stroke-width="1"/><path d="M7 3.500l3.500 3.500 1-1-0.800-0.800 1.800-1.800a1.400 1.400 0 0 0-2-2L8.700 3.200 8 2.500z" fill="#e2e2e2"/></svg>
<div class="r3" style="left:1600px;top:360px;width:50px;height:18px;background:#4b4b4b;border:1px solid #363636;"></div>
<span class="t" style="left:1603.0px;top:361.0px;line-height:17px;font-size:13px;color:#e6e6e6;transform:scaleX(0.908);transform-origin:0 50%;">Hex</span>
<svg style="left:1637px;top:367px;" width="9" height="5.5" viewBox="0 0 9 5.5"><path d="M0.500 0.500 4.500 5 8.500 0.500" fill="none" stroke="#d0d0d0" stroke-width="1.1"/></svg>
<div class="r3" style="left:1653px;top:358px;width:240px;height:21.5px;background:#2a2a2a;"></div>
<span class="t" style="left:1657.5px;top:362.0px;line-height:15px;font-size:11px;color:#666;transform:scaleX(0.930);transform-origin:0 50%;">#</span>
<span class="t" style="left:1670.5px;top:361.0px;line-height:17px;font-size:13px;color:#e6e6e6;transform:scaleX(0.945);transform-origin:0 50%;">646464</span>
<div style="left:1600px;top:390.8px;width:233px;height:3px;background:#e4e4e4;border-radius:2px;"></div>
<svg style="left:1828.5px;top:386.3px;" width="12" height="12" viewBox="0 0 12 12"><circle cx="6" cy="6" r="5" fill="#7fd0b6" stroke="#2f6f5c" stroke-width="1"/><circle cx="6" cy="6" r="2.200" fill="#a5e4d0"/></svg>
<div class="r3" style="left:1849px;top:384px;width:44px;height:16px;background:#2a2a2a;"></div>
<span class="t" style="left:1852.5px;top:383.5px;line-height:17px;font-size:13px;color:#666;transform:scaleX(0.930);transform-origin:0 50%;">A</span>
<span class="t" style="left:1866.0px;top:383.5px;line-height:17px;font-size:13px;color:#e6e6e6;transform:scaleX(0.945);transform-origin:0 50%;">255</span>
<div style="left:1597.2px;top:406px;width:298.8px;height:22.4px;background:#2a2a2a;"></div>
<div style="left:1597.2px;top:469.6px;width:298.8px;height:54.2px;background:#262626;"></div>
<div style="left:1599px;top:408px;width:147.8px;height:20.4px;background:#444444;border-radius:3px 3px 0 0;"></div>
<span class="t" style="left:1644.6px;top:409.0px;line-height:17px;font-size:13px;color:#e6e6e6;transform:scaleX(0.869);transform-origin:50% 50%;">Swatches</span>
<span class="t" style="left:1791.1px;top:409.0px;line-height:17px;font-size:13px;color:#bcbcbc;transform:scaleX(0.922);transform-origin:50% 50%;">Generator</span>
<div class="r3" style="left:1598px;top:431.4px;width:257px;height:17.2px;background:#565656;"></div>
<div class="r3" style="left:1598.5px;top:432px;width:63px;height:16px;background:#2a2a2a;"></div>
<svg style="left:1605.5px;top:435px;" width="11" height="10" viewBox="0 0 11 10"><path d="M1 0v10M4 0v10" stroke="#35c46f" stroke-width="1.500"/><path d="M6.500 0.500 10 10" stroke="#35c46f" stroke-width="1.500"/></svg>
<span class="t" style="left:1621.3px;top:431.5px;line-height:17px;font-size:13px;color:#e6e6e6;transform:scaleX(0.931);transform-origin:0 50%;">Library</span>
<svg style="left:1671px;top:435px;" width="10" height="10" viewBox="0 0 10 10"><path d="M0 3V0.500h4l1 1.500h4.500" fill="none" stroke="#e2e2e2" stroke-width="1"/><rect x="0.500" y="3" width="9" height="6.500" fill="#e2e2e2"/><path d="M2 5h1.500M4.500 5h3.500M2 7.500h1.500M4.500 7.500h3.500" stroke="#565656" stroke-width="1"/></svg>
<span class="t" style="left:1686.3px;top:431.5px;line-height:17px;font-size:13px;color:#e6e6e6;transform:scaleX(0.932);transform-origin:0 50%;">Project</span>
<svg style="left:1738px;top:434.5px;" width="8" height="10" viewBox="0 0 8 10"><path d="M0.500 0.500h4.500l2.500 2.500v6.500h-7z" fill="none" stroke="#e2e2e2" stroke-width="1"/><path d="M5 0.500v2.500h2.500" fill="none" stroke="#e2e2e2" stroke-width="1"/></svg>
<span class="t" style="left:1752.3px;top:431.5px;line-height:17px;font-size:13px;color:#e6e6e6;transform:scaleX(0.841);transform-origin:0 50%;">Scene</span>
<svg style="left:1801px;top:435px;" width="10" height="10" viewBox="0 0 10 10"><path d="M2.500 0.500h5a2 2 0 0 1 2 2v3.500l-3.500 3.500h-3.500a2 2 0 0 1-2-2v-5a2 2 0 0 1 2-2z" fill="none" stroke="#e2e2e2" stroke-width="1"/><path d="M9.500 6h-2a1.500 1.500 0 0 0-1.500 1.500v2" fill="none" stroke="#e2e2e2" stroke-width="1"/></svg>
<span class="t" style="left:1816.4px;top:431.5px;line-height:17px;font-size:13px;color:#e6e6e6;transform:scaleX(0.848);transform-origin:0 50%;">Labels</span>
<div class="r3" style="left:1858px;top:431.4px;width:37px;height:17.2px;background:#565656;"></div>
<div class="r3" style="left:1858px;top:431.4px;width:18.5px;height:17.2px;background:#262626;border:1px solid #1e1e1e;"></div>
<svg style="left:1862.5px;top:435.5px;" width="9" height="9" viewBox="0 0 9 9"><rect x="0.0" y="0.0" width="3.500" height="3.500" fill="#35c46f"/><rect x="0.0" y="5.5" width="3.500" height="3.500" fill="#35c46f"/><rect x="5.5" y="0.0" width="3.500" height="3.500" fill="#35c46f"/><rect x="5.5" y="5.5" width="3.500" height="3.500" fill="#35c46f"/></svg>
<svg style="left:1880.5px;top:435.5px;" width="10" height="9" viewBox="0 0 10 9"><path d="M0 1h10M0 4.500h10M0 8h10" stroke="#e2e2e2" stroke-width="1.100"/></svg>
<div class="r3" style="left:1598px;top:453.4px;width:275px;height:15.6px;background:#4b4b4b;border:1px solid #363636;"></div>
<span class="t" style="left:1601.0px;top:452.5px;line-height:17px;font-size:13px;color:#f0f0f0;transform:scaleX(0.870);transform-origin:0 50%;">Simple</span>
<svg style="left:1861px;top:458.5px;" width="9" height="5.5" viewBox="0 0 9 5.5"><path d="M0.500 0.500 4.500 5 8.500 0.500" fill="none" stroke="#d0d0d0" stroke-width="1.1"/></svg>
<div style="left:1880.5px;top:460.2px;width:2px;height:2px;background:#d8d8d8;"></div>
<div style="left:1885.0px;top:460.2px;width:2px;height:2px;background:#d8d8d8;"></div>
<div style="left:1889.5px;top:460.2px;width:2px;height:2px;background:#d8d8d8;"></div>
<div class="r3" style="left:1600px;top:472px;width:18px;height:18px;background:#0b72c4;"></div>
<div class="r3" style="left:1622px;top:472px;width:18px;height:18px;background:#0d9fe2;"></div>
<div class="r3" style="left:1644px;top:472px;width:18px;height:18px;background:#8fc46a;"></div>
<div class="r3" style="left:1666px;top:472px;width:18px;height:18px;background:#f3e64c;"></div>
<div class="r3" style="left:1688px;top:472px;width:18px;height:18px;background:#f07800;"></div>
<div style="left:1593.5px;top:530px;width:38px;height:22px;background:#444444;border-radius:3px 3px 0 0;"></div>
<span class="t" style="left:1598.5px;top:533.0px;line-height:17px;font-size:13px;color:#e6e6e6;transform:scaleX(0.934);transform-origin:0 50%;">Align</span>
<div style="left:1593.5px;top:552px;width:320.5px;height:68px;background:#444444;"></div>
<span class="t" style="left:1601.0px;top:563.0px;line-height:17px;font-size:13px;color:#e6e6e6;transform:scaleX(0.927);transform-origin:0 50%;">Alignment</span>
<span class="t" style="left:1601.0px;top:591.0px;line-height:17px;font-size:13px;color:#e6e6e6;transform:scaleX(0.969);transform-origin:0 50%;">Distribution</span>
<div class="r3" style="left:1790.2px;top:563px;width:53.5px;height:16px;background:#2a2a2a;border:1px solid #1c1c1c;"></div>
<svg style="left:1793.2px;top:565px;" width="12" height="12" viewBox="0 0 12 12"><path d="M1 0v12M3 3.500h7M3 8.500h5" stroke="#e2e2e2" stroke-width="1.200" fill="none"/></svg>
<div style="left:1808.0px;top:564px;width:1px;height:14px;background:#1c1c1c;"></div>
<svg style="left:1811.0px;top:565px;" width="12" height="12" viewBox="0 0 12 12"><path d="M6 0v12M1 3.500h10M2.500 8.500h7" stroke="#e2e2e2" stroke-width="1.200" fill="none"/></svg>
<div style="left:1825.8px;top:564px;width:1px;height:14px;background:#1c1c1c;"></div>
<svg style="left:1828.8px;top:565px;" width="12" height="12" viewBox="0 0 12 12"><path d="M11 0v12M2 3.500h7M4 8.500h5" stroke="#e2e2e2" stroke-width="1.200" fill="none"/></svg>
<div class="r3" style="left:1852px;top:563px;width:53.5px;height:16px;background:#2a2a2a;border:1px solid #1c1c1c;"></div>
<svg style="left:1855.0px;top:565px;" width="12" height="12" viewBox="0 0 12 12"><path d="M0 1h12M3.500 3v8M8.500 3v5" stroke="#e2e2e2" stroke-width="1.200" fill="none"/></svg>
<div style="left:1869.8px;top:564px;width:1px;height:14px;background:#1c1c1c;"></div>
<svg style="left:1872.8px;top:565px;" width="12" height="12" viewBox="0 0 12 12"><path d="M0 6h12M3.500 1v10M8.500 2.500v7" stroke="#e2e2e2" stroke-width="1.200" fill="none"/></svg>
<div style="left:1887.6px;top:564px;width:1px;height:14px;background:#1c1c1c;"></div>
<svg style="left:1890.6px;top:565px;" width="12" height="12" viewBox="0 0 12 12"><path d="M0 11h12M3.500 3v6M8.500 5v4" stroke="#e2e2e2" stroke-width="1.200" fill="none"/></svg>
<div class="r3" style="left:1790.2px;top:591px;width:53.5px;height:16px;background:#2a2a2a;border:1px solid #1c1c1c;"></div>
<svg style="left:1793.2px;top:593px;" width="12" height="12" viewBox="0 0 12 12"><path d="M1 0v12M5 1v10M8 1v10" stroke="#e2e2e2" stroke-width="1.200" fill="none"/></svg>
<div style="left:1808.0px;top:592px;width:1px;height:14px;background:#1c1c1c;"></div>
<svg style="left:1811.0px;top:593px;" width="12" height="12" viewBox="0 0 12 12"><path d="M0 2h12M0 6h12M0 10h12" stroke="#e2e2e2" stroke-width="1.200" fill="none"/></svg>
<div style="left:1825.8px;top:592px;width:1px;height:14px;background:#1c1c1c;"></div>
<svg style="left:1828.8px;top:593px;" width="12" height="12" viewBox="0 0 12 12"><path d="M1 1h2M9 1h2M1 11h2M9 11h2M1 1v2M11 1v2M1 9v2M11 9v2" stroke="#e2e2e2" stroke-width="1.200" fill="none"/><path d="M3.500 9 8.500 3.500" stroke="#e2e2e2" stroke-width="2.200"/></svg>
<div style="left:494.2px;top:626px;width:88.6px;height:22px;background:#444444;border-radius:3px 3px 0 0;"></div>
<span class="t" style="left:499.7px;top:629.0px;line-height:17px;font-size:13px;color:#e6e6e6;transform:scaleX(0.895);transform-origin:0 50%;">Scene Window</span>
<div style="left:584px;top:626px;width:100px;height:22px;background:#282828;border-radius:3px 3px 0 0;"></div>
<span class="t" style="left:589.5px;top:629.0px;line-height:17px;font-size:13px;color:#e6e6e6;transform:scaleX(0.906);transform-origin:0 50%;">JavaScript Editor</span>
<div style="left:685px;top:626px;width:112px;height:22px;background:#282828;border-radius:3px 3px 0 0;"></div>
<span class="t" style="left:690.3px;top:629.0px;line-height:17px;font-size:13px;color:#e6e6e6;transform:scaleX(0.900);transform-origin:0 50%;">Dependency Graph</span>
<div style="left:494.2px;top:648px;width:1419.8px;height:1.3px;background:#35c46f;"></div>
<div style="left:494.2px;top:649.3px;width:1419.8px;height:20px;background:#262626;"></div>
<div style="left:1627px;top:650.5px;width:282px;height:18.8px;background:#444444;border-radius:3px 3px 0 0;"></div>
<span class="t" style="left:587.8px;top:650.8px;line-height:17px;font-size:13px;color:#c0c0c0;transform:scaleX(0.912);transform-origin:50% 50%;">Composition 1</span>
<svg style="left:764.2px;top:655.5px;" width="8" height="8" viewBox="0 0 8 8"><path d="M0.500 0.500l7 7M7.500 0.500l-7 7" stroke="#bdbdbd" stroke-width="1"/></svg>
<div style="left:781.3px;top:654px;width:1px;height:12px;background:#9a9a9a;"></div>
<span class="t" style="left:834.9px;top:650.8px;line-height:17px;font-size:13px;color:#c0c0c0;transform:scaleX(0.911);transform-origin:50% 50%;">background grid animation</span>
<svg style="left:1045.8px;top:655.5px;" width="8" height="8" viewBox="0 0 8 8"><path d="M0.500 0.500l7 7M7.500 0.500l-7 7" stroke="#bdbdbd" stroke-width="1"/></svg>
<div style="left:1063.1px;top:654px;width:1px;height:12px;background:#9a9a9a;"></div>
<span class="t" style="left:1111.5px;top:650.8px;line-height:17px;font-size:13px;color:#c0c0c0;transform:scaleX(0.908);transform-origin:50% 50%;">background grid animation 1</span>
<svg style="left:1327.8px;top:655.5px;" width="8" height="8" viewBox="0 0 8 8"><path d="M0.500 0.500l7 7M7.500 0.500l-7 7" stroke="#bdbdbd" stroke-width="1"/></svg>
<div style="left:1345.0px;top:654px;width:1px;height:12px;background:#9a9a9a;"></div>
<span class="t" style="left:1393.5px;top:650.8px;line-height:17px;font-size:13px;color:#c0c0c0;transform:scaleX(0.908);transform-origin:50% 50%;">background grid animation 2</span>
<svg style="left:1609.8px;top:655.5px;" width="8" height="8" viewBox="0 0 8 8"><path d="M0.500 0.500l7 7M7.500 0.500l-7 7" stroke="#bdbdbd" stroke-width="1"/></svg>
<span class="t" style="left:1711.5px;top:650.8px;line-height:17px;font-size:13px;color:#e6e6e6;transform:scaleX(0.929);transform-origin:50% 50%;">duplicator blend</span>
<svg style="left:1891.8px;top:655.5px;" width="8" height="8" viewBox="0 0 8 8"><path d="M0.500 0.500l7 7M7.500 0.500l-7 7" stroke="#bdbdbd" stroke-width="1"/></svg>
<div style="left:494.2px;top:669.3px;width:525px;height:307px;background:#2a2a2a;"></div>
<div style="left:494.2px;top:669.3px;width:525px;height:24.3px;background:#3d3d3d;"></div>
<div style="left:496.4px;top:672.3px;width:314px;height:19.7px;background:#242424;border-radius:10px;"></div>
<svg style="left:500px;top:676px;" width="14" height="14" viewBox="0 0 14 14"><circle cx="5.500" cy="5.500" r="4.700" fill="none" stroke="#d8d8d8" stroke-width="1.100"/><path d="M9 9l3.500 3.500" stroke="#d8d8d8" stroke-width="1.800"/></svg>
<span class="t" style="left:520.0px;top:673.8px;line-height:17px;font-size:13px;color:#8c8c8c;transform:scaleX(0.883);transform-origin:0 50%;">Enter a layer name</span>
<div class="r3" style="left:813.3px;top:672.3px;width:19px;height:19.4px;background:#2b2b2b;border:1px solid #1e1e1e;"></div>
<svg style="left:817.8px;top:677px;" width="10" height="10" viewBox="0 0 10 10"><path d="M5 0v10M0 5h10" stroke="#f0f0f0" stroke-width="1.600"/></svg>
<div class="r3" style="left:856.7px;top:672.3px;width:20px;height:19.4px;background:#2b2b2b;border:1px solid #1e1e1e;"></div>
<div class="r3" style="left:879px;top:672.3px;width:20px;height:19.4px;background:#2b2b2b;border:1px solid #1e1e1e;"></div>
<div class="r3" style="left:901px;top:672.3px;width:20px;height:19.4px;background:#2b2b2b;border:1px solid #1e1e1e;"></div>
<svg style="left:860px;top:675px;" width="14" height="14" viewBox="0 0 14 14"><circle cx="8.500" cy="5.500" r="4.500" fill="#e2e2e2"/><circle cx="5.500" cy="8.500" r="4.500" fill="#8a8a8a"/><circle cx="4" cy="10" r="3" fill="#5a5a5a"/></svg>
<svg style="left:882.5px;top:675.5px;" width="13" height="13" viewBox="0 0 13 13"><g fill="#e2e2e2"><circle cx="2" cy="2" r="1.100"/><circle cx="6.500" cy="2" r="1.100"/><circle cx="11" cy="2" r="1.100"/><circle cx="2" cy="6.500" r="1.100"/><circle cx="2" cy="11" r="1.100"/><path d="M8 4.500l1.100 2.400L11.500 8 9.100 9.100 8 11.500 6.900 9.100 4.500 8l2.400-1.100z"/></g></svg>
<svg style="left:904.5px;top:675.5px;" width="13" height="13" viewBox="0 0 13 13"><path d="M0 2h3M6 2h7M0 6.500h7M10 6.500h3M0 11h3M6 11h7" stroke="#e2e2e2" stroke-width="1.100"/><circle cx="4.500" cy="2" r="1.400" fill="none" stroke="#e2e2e2"/><circle cx="8.500" cy="6.500" r="1.400" fill="none" stroke="#e2e2e2"/><circle cx="4.500" cy="11" r="1.400" fill="none" stroke="#e2e2e2"/></svg>
<div class="r3" style="left:922.7px;top:672.3px;width:95px;height:19.4px;background:#2b2b2b;"></div>
<span class="t" style="left:927.7px;top:674.5px;line-height:17px;font-size:13px;color:#5e5e5e;transform:scaleX(0.930);transform-origin:0 50%;">F</span>
<span class="t" style="left:940.0px;top:674.5px;line-height:17px;font-size:13px;color:#e6e6e6;transform:scaleX(0.954);transform-origin:0 50%;">127</span>
<div style="left:494.2px;top:693.6px;width:525px;height:18.4px;background:#444444;"></div>
<svg style="left:500px;top:696.8px;" width="10" height="12" viewBox="0 0 10 12"><rect x="0.500" y="5" width="9" height="6.500" rx="1" fill="#cfcfcf"/><path d="M2.500 5V3.300a2.500 2.500 0 0 1 5 0V5" fill="none" stroke="#cfcfcf" stroke-width="1.300"/><rect x="4.300" y="7" width="1.400" height="2.500" fill="#474747"/></svg>
<svg style="left:517px;top:698.3px;" width="14" height="9" viewBox="0 0 14 9"><path d="M0.500 4.500C3 0.800 11 0.800 13.500 4.500 11 8.200 3 8.200 0.500 4.500z" fill="none" stroke="#cfcfcf" stroke-width="1"/><circle cx="7" cy="4.500" r="2" fill="#cfcfcf"/></svg>
<svg style="left:536.3px;top:696.3px;" width="13" height="14" viewBox="0 0 13 14"><path d="M6.500 0.500 12.500 3.500v7L6.500 13.500 0.500 10.500v-7z M0.500 3.500 6.500 6.500 12.500 3.500M6.500 6.500v7" fill="none" stroke="#cfcfcf" stroke-width="1"/></svg>
<svg style="left:555.2px;top:696.8px;" width="14" height="12" viewBox="0 0 14 12"><path d="M0.500 4h2.500L7 0.500v11L3 8H0.500z" fill="#cfcfcf"/><path d="M8.800 3.500a3.500 3.500 0 0 1 0 5M10.800 1.500a6 6 0 0 1 0 9" fill="none" stroke="#cfcfcf" stroke-width="1.200"/></svg>
<svg style="left:574.2px;top:696.3px;" width="14" height="14" viewBox="0 0 14 14"><path d="M1 13l1.200-3 5.500-5.500 1.800 1.800L4 11.800z" fill="none" stroke="#cfcfcf" stroke-width="1"/><path d="M7 3.500l3.500 3.500 1-1-0.800-0.800 1.800-1.800a1.400 1.400 0 0 0-2-2L8.700 3.200 8 2.500z" fill="#cfcfcf"/></svg>
<svg style="left:592.7px;top:698.3px;" width="14" height="9" viewBox="0 0 14 9"><path d="M0 4.500 3.500 0H14v9H3.500z" fill="#cfcfcf"/><circle cx="4" cy="4.500" r="1.300" fill="#444444"/></svg>
<span class="t" style="left:649.2px;top:694.8px;line-height:17px;font-size:13px;color:#e6e6e6;transform:scaleX(0.894);transform-origin:0 50%;">Name</span>
<div style="left:494.2px;top:712.4px;width:510.7px;height:65.6px;background:#363636;"></div>
<div class="r2" style="left:496.2px;top:714.1999999999999px;width:17.5px;height:17.7px;background:#2a2a2a;"></div>
<div class="r2" style="left:515px;top:714.1999999999999px;width:18px;height:17.7px;background:#2a2a2a;"></div>
<svg style="left:518px;top:716.8px;" width="12" height="12" viewBox="0 0 12 12"><circle cx="6" cy="6" r="5" fill="none" stroke="#d8d8d8" stroke-width="1"/><path d="M3.500 6 5.500 8 10.500 2" fill="none" stroke="#d8d8d8" stroke-width="1.300"/></svg>
<div class="r2" style="left:573px;top:714.8px;width:16px;height:16px;background:#74e09b;"></div>
<svg style="left:592.7px;top:718.5px;" width="14" height="9" viewBox="0 0 14 9"><path d="M0 4.500 3.500 0H14v9H3.500z" fill="#d8d8d8"/><circle cx="4" cy="4.500" r="1.300" fill="#363636"/></svg>
<span class="t" style="left:667.3px;top:714.8px;line-height:17px;font-size:13px;color:#e6e6e6;transform:scaleX(0.938);transform-origin:0 50%;">Color Array</span>
<svg style="left:991px;top:718.0px;" width="10" height="10" viewBox="0 0 10 10"><circle cx="5" cy="5" r="4.200" fill="none" stroke="#8a8a8a" stroke-width="1.200"/></svg>
<div class="r3" style="left:495.5px;top:734.9px;width:507.5px;height:19.7px;background:#5a5544;"></div>
<div class="r2" style="left:496.2px;top:736.3px;width:17.5px;height:17.7px;background:#2a2a2a;"></div>
<div class="r2" style="left:515px;top:736.3px;width:18px;height:17.7px;background:#2a2a2a;"></div>
<div class="r2" style="left:534.3px;top:736.3px;width:17.6px;height:17.7px;background:#2a2a2a;"></div>
<svg style="left:517px;top:740.4px;" width="14" height="9" viewBox="0 0 14 9"><path d="M0.500 4.500C3 0.800 11 0.800 13.500 4.500 11 8.200 3 8.200 0.500 4.500z" fill="none" stroke="#d8d8d8" stroke-width="1"/><circle cx="7" cy="4.500" r="2" fill="#d8d8d8"/></svg>
<div class="r2" style="left:573px;top:736.9px;width:16px;height:16px;background:#ffe57a;"></div>
<svg style="left:592.7px;top:740.6px;" width="14" height="9" viewBox="0 0 14 9"><path d="M0 4.500 3.500 0H14v9H3.500z" fill="#d8d8d8"/><circle cx="4" cy="4.500" r="1.300" fill="#5a5544"/></svg>
<span class="t" style="left:667.3px;top:736.9px;line-height:17px;font-size:13px;color:#e6e6e6;transform:scaleX(0.893);transform-origin:0 50%;">inputShape</span>
<svg style="left:991px;top:740.1px;" width="10" height="10" viewBox="0 0 10 10"><circle cx="5" cy="5" r="4.200" fill="none" stroke="#8a8a8a" stroke-width="1.200"/></svg>
<div class="r2" style="left:496.2px;top:758.1999999999999px;width:17.5px;height:17.7px;background:#2a2a2a;"></div>
<div class="r2" style="left:515px;top:758.1999999999999px;width:18px;height:17.7px;background:#2a2a2a;"></div>
<div class="r2" style="left:534.3px;top:758.1999999999999px;width:17.6px;height:17.7px;background:#2a2a2a;"></div>
<svg style="left:517px;top:762.3px;" width="14" height="9" viewBox="0 0 14 9"><path d="M0.500 4.500C3 0.800 11 0.800 13.500 4.500 11 8.200 3 8.200 0.500 4.500z" fill="none" stroke="#d8d8d8" stroke-width="1"/><circle cx="7" cy="4.500" r="2" fill="#d8d8d8"/></svg>
<div class="r2" style="left:573px;top:758.8px;width:16px;height:16px;background:#ffe57a;"></div>
<svg style="left:592.7px;top:762.5px;" width="14" height="9" viewBox="0 0 14 9"><path d="M0 4.500 3.500 0H14v9H3.500z" fill="#d8d8d8"/><circle cx="4" cy="4.500" r="1.300" fill="#363636"/></svg>
<span class="t" style="left:667.3px;top:758.8px;line-height:17px;font-size:13px;color:#e6e6e6;transform:scaleX(0.877);transform-origin:0 50%;">Background Shape</span>
<svg style="left:991px;top:762.0px;" width="10" height="10" viewBox="0 0 10 10"><circle cx="5" cy="5" r="4.200" fill="none" stroke="#8a8a8a" stroke-width="1.200"/></svg>
<svg style="left:648.5px;top:715px;" width="15" height="15" viewBox="0 0 15 15"><rect x="0.500" y="5" width="9" height="9" fill="#8ec8f4"/><rect x="5" y="4" width="6" height="5" fill="#3a3a3a"/><path d="M5.500 9V4.500h5" fill="none" stroke="#e0e0e0" stroke-width="1"/><path d="M7 0.500h7.500M9 2.500h5.500M11 4.500h3.500" stroke="#e0e0e0" stroke-width="1"/></svg>
<svg style="left:649px;top:739px;" width="12" height="12" viewBox="0 0 12 12"><path d="M3.500 0.800h5M3.500 11.200h5M0.800 3.500v5M11.200 3.500v5" stroke="#f3e35f" stroke-width="1.200"/><g fill="#e8e8e8"><rect x="0" y="0" width="1.800" height="1.800"/><rect x="10.200" y="0" width="1.800" height="1.800"/><rect x="0" y="10.200" width="1.800" height="1.800"/><rect x="10.200" y="10.200" width="1.800" height="1.800"/></g></svg>
<svg style="left:648.5px;top:759.8px;" width="14" height="14" viewBox="0 0 14 14"><rect x="0.600" y="0.600" width="12.800" height="12.800" fill="none" stroke="#f3e35f" stroke-width="1.200"/><rect x="2.500" y="2.500" width="9" height="9" fill="#d0d0d0"/></svg>
<div class="r3" style="left:965px;top:714.8px;width:21.7px;height:16px;background:#2a2a2a;"></div>
<svg style="left:967px;top:718.8px;" width="18" height="8" viewBox="0 0 18 8"><path d="M0 4 3 1.200a1.500 1.500 0 0 1 1.200-0.500H6.500v6.600H4.200A1.500 1.500 0 0 1 3 6.800z" fill="#7c7c7c"/><path d="M18 4 15 1.200a1.500 1.500 0 0 0-1.200-0.500H11.500v6.600h2.300a1.500 1.500 0 0 0 1.200-0.500z" fill="#d46ad8"/></svg>
<div class="r2" style="left:976.5px;top:714.8px;width:10.2px;height:16px;border:1px solid #b860bc;"></div>
<div class="r3" style="left:965px;top:736.9px;width:21.7px;height:16px;background:#2a2a2a;"></div>
<svg style="left:967px;top:740.9px;" width="18" height="8" viewBox="0 0 18 8"><path d="M0 4 3 1.200a1.500 1.500 0 0 1 1.200-0.500H6.500v6.600H4.200A1.500 1.500 0 0 1 3 6.800z" fill="#dcc76a"/><path d="M18 4 15 1.200a1.500 1.500 0 0 0-1.200-0.500H11.500v6.600h2.300a1.500 1.500 0 0 0 1.200-0.500z" fill="#858585"/></svg>
<div style="left:1007px;top:712.8px;width:10px;height:248px;background:#505050;border-radius:5px;"></div>
<div style="left:495px;top:964px;width:509.29999999999995px;height:9.3px;background:#4a4a4a;border-radius:5px;"></div>
<div style="left:494.2px;top:976px;width:525px;height:22px;background:#444444;"></div>
<div class="r3" style="left:497.7px;top:978.3px;width:18.5px;height:17.7px;background:#2b2b2b;border:1px solid #1e1e1e;"></div>
<svg style="left:500px;top:982.7px;" width="14" height="9" viewBox="0 0 14 9"><path d="M0 4.500 3.500 0H14v9H3.500z" fill="#dcdcdc"/><circle cx="4" cy="4.500" r="1.300" fill="#2b2b2b"/></svg>
<span class="t" style="left:520.7px;top:979.0px;line-height:17px;font-size:13px;color:#e6e6e6;transform:scaleX(0.877);transform-origin:0 50%;">1 selected</span>
<div class="r3" style="left:810.7px;top:978.3px;width:18.6px;height:17.7px;background:#2b2b2b;border:1px solid #1e1e1e;"></div>
<svg style="left:814.5px;top:981.7px;" width="11" height="11" viewBox="0 0 11 11"><rect x="0.500" y="0.500" width="10" height="10" rx="1.500" fill="none" stroke="#e2e2e2" stroke-width="1"/><rect x="3.500" y="3.500" width="4" height="4" fill="#e2e2e2"/></svg>
<div class="r3" style="left:833.3px;top:979px;width:182.7px;height:16.7px;background:#5a5a5a;"></div>
<div class="r3" style="left:833.3px;top:979px;width:86.7px;height:16.7px;background:#262626;border:1px solid #1e1e1e;"></div>
<svg style="left:840px;top:982.5px;" width="12" height="10" viewBox="0 0 12 10"><path d="M0 1h12M2 5h8M0 9h10" stroke="#35c46f" stroke-width="1.800"/></svg>
<span class="t" style="left:856.0px;top:979.0px;line-height:17px;font-size:13px;color:#e6e6e6;transform:scaleX(0.920);transform-origin:0 50%;">Time Editor</span>
<svg style="left:927.7px;top:981.5px;" width="13" height="12" viewBox="0 0 13 12"><path d="M2.500 0v9.500h10.500M0 7.500l2.500 2M2.500 9.500 10 3" fill="none" stroke="#c8c8c8" stroke-width="1.100"/></svg>
<span class="t" style="left:945.0px;top:979.0px;line-height:17px;font-size:13px;color:#e6e6e6;transform:scaleX(0.913);transform-origin:0 50%;">Graph Editor</span>
<div style="left:1023px;top:669.3px;width:891px;height:307px;background:#1c1c1c;"></div>
<div style="left:1026px;top:670.2px;width:887.7px;height:24px;background:#252525;"></div>
<div style="left:1034px;top:694.2px;width:871px;height:282px;background:#2a2a2a;"></div>
<div style="left:1905px;top:694.2px;width:8.7px;height:282px;background:#232323;"></div>
<div style="left:1034px;top:694.2px;width:871px;height:16.2px;background:#444444;"></div>
<div style="left:1029px;top:693px;width:5.2px;height:17.8px;background:#7ac9b0;"></div>
<div style="left:1905px;top:693.2px;width:5.1px;height:17.8px;background:#7ac9b0;"></div>
<svg style="left:0px;top:0px;" width="1920" height="1029" viewBox="0 0 1920 1029"><path d="M1034.0 686V694.200" stroke="#6e6e6e" stroke-width="1.500"/><path d="M1044.5 690V694.200" stroke="#6e6e6e" stroke-width="1.500"/><path d="M1054.9 690V694.200" stroke="#6e6e6e" stroke-width="1.500"/><path d="M1065.4 690V694.200" stroke="#6e6e6e" stroke-width="1.500"/><path d="M1075.8 690V694.200" stroke="#6e6e6e" stroke-width="1.500"/><path d="M1086.3 686V694.200" stroke="#6e6e6e" stroke-width="1.500"/><path d="M1096.7 690V694.200" stroke="#6e6e6e" stroke-width="1.500"/><path d="M1107.2 690V694.200" stroke="#6e6e6e" stroke-width="1.500"/><path d="M1117.7 690V694.200" stroke="#6e6e6e" stroke-width="1.500"/><path d="M1128.1 690V694.200" stroke="#6e6e6e" stroke-width="1.500"/><path d="M1138.6 686V694.200" stroke="#6e6e6e" stroke-width="1.500"/><path d="M1149.0 690V694.200" stroke="#6e6e6e" stroke-width="1.500"/><path d="M1159.5 690V694.200" stroke="#6e6e6e" stroke-width="1.500"/><path d="M1170.0 690V694.200" stroke="#6e6e6e" stroke-width="1.500"/><path d="M1180.4 690V694.200" stroke="#6e6e6e" stroke-width="1.500"/><path d="M1190.9 686V694.200" stroke="#6e6e6e" stroke-width="1.500"/><path d="M1201.3 690V694.200" stroke="#6e6e6e" stroke-width="1.500"/><path d="M1211.8 690V694.200" stroke="#6e6e6e" stroke-width="1.500"/><path d="M1222.2 690V694.200" stroke="#6e6e6e" stroke-width="1.500"/><path d="M1232.7 690V694.200" stroke="#6e6e6e" stroke-width="1.500"/><path d="M1243.2 686V694.200" stroke="#6e6e6e" stroke-width="1.500"/><path d="M1253.6 690V694.200" stroke="#6e6e6e" stroke-width="1.500"/><path d="M1264.1 690V694.200" stroke="#6e6e6e" stroke-width="1.500"/><path d="M1274.5 690V694.200" stroke="#6e6e6e" stroke-width="1.500"/><path d="M1285.0 690V694.200" stroke="#6e6e6e" stroke-width="1.500"/><path d="M1295.5 686V694.200" stroke="#6e6e6e" stroke-width="1.500"/><path d="M1305.9 690V694.200" stroke="#6e6e6e" stroke-width="1.500"/><path d="M1316.4 690V694.200" stroke="#6e6e6e" stroke-width="1.500"/><path d="M1326.8 690V694.200" stroke="#6e6e6e" stroke-width="1.500"/><path d="M1337.3 690V694.200" stroke="#6e6e6e" stroke-width="1.500"/><path d="M1347.7 686V694.200" stroke="#6e6e6e" stroke-width="1.500"/><path d="M1358.2 690V694.200" stroke="#6e6e6e" stroke-width="1.500"/><path d="M1368.7 690V694.200" stroke="#6e6e6e" stroke-width="1.500"/><path d="M1379.1 690V694.200" stroke="#6e6e6e" stroke-width="1.500"/><path d="M1389.6 690V694.200" stroke="#6e6e6e" stroke-width="1.500"/><path d="M1400.0 686V694.200" stroke="#6e6e6e" stroke-width="1.500"/><path d="M1410.5 690V694.200" stroke="#6e6e6e" stroke-width="1.500"/><path d="M1420.9 690V694.200" stroke="#6e6e6e" stroke-width="1.500"/><path d="M1431.4 690V694.200" stroke="#6e6e6e" stroke-width="1.500"/><path d="M1441.9 690V694.200" stroke="#6e6e6e" stroke-width="1.500"/><path d="M1452.3 686V694.200" stroke="#6e6e6e" stroke-width="1.500"/><path d="M1462.8 690V694.200" stroke="#6e6e6e" stroke-width="1.500"/><path d="M1473.2 690V694.200" stroke="#6e6e6e" stroke-width="1.500"/><path d="M1483.7 690V694.200" stroke="#6e6e6e" stroke-width="1.500"/><path d="M1494.2 690V694.200" stroke="#6e6e6e" stroke-width="1.500"/><path d="M1504.6 686V694.200" stroke="#6e6e6e" stroke-width="1.500"/><path d="M1515.1 690V694.200" stroke="#6e6e6e" stroke-width="1.500"/><path d="M1525.5 690V694.200" stroke="#6e6e6e" stroke-width="1.500"/><path d="M1536.0 690V694.200" stroke="#6e6e6e" stroke-width="1.500"/><path d="M1546.4 690V694.200" stroke="#6e6e6e" stroke-width="1.500"/><path d="M1556.9 686V694.200" stroke="#6e6e6e" stroke-width="1.500"/><path d="M1567.4 690V694.200" stroke="#6e6e6e" stroke-width="1.500"/><path d="M1577.8 690V694.200" stroke="#6e6e6e" stroke-width="1.500"/><path d="M1588.3 690V694.200" stroke="#6e6e6e" stroke-width="1.500"/><path d="M1598.7 690V694.200" stroke="#6e6e6e" stroke-width="1.500"/><path d="M1609.2 686V694.200" stroke="#6e6e6e" stroke-width="1.500"/><path d="M1619.6 690V694.200" stroke="#6e6e6e" stroke-width="1.500"/><path d="M1630.1 690V694.200" stroke="#6e6e6e" stroke-width="1.500"/><path d="M1640.6 690V694.200" stroke="#6e6e6e" stroke-width="1.500"/><path d="M1651.0 690V694.200" stroke="#6e6e6e" stroke-width="1.500"/><path d="M1661.5 686V694.200" stroke="#6e6e6e" stroke-width="1.500"/><path d="M1671.9 690V694.200" stroke="#6e6e6e" stroke-width="1.500"/><path d="M1682.4 690V694.200" stroke="#6e6e6e" stroke-width="1.500"/><path d="M1692.9 690V694.200" stroke="#6e6e6e" stroke-width="1.500"/><path d="M1703.3 690V694.200" stroke="#6e6e6e" stroke-width="1.500"/><path d="M1713.8 686V694.200" stroke="#6e6e6e" stroke-width="1.500"/><path d="M1724.2 690V694.200" stroke="#6e6e6e" stroke-width="1.500"/><path d="M1734.7 690V694.200" stroke="#6e6e6e" stroke-width="1.500"/><path d="M1745.1 690V694.200" stroke="#6e6e6e" stroke-width="1.500"/><path d="M1755.6 690V694.200" stroke="#6e6e6e" stroke-width="1.500"/><path d="M1766.1 686V694.200" stroke="#6e6e6e" stroke-width="1.500"/><path d="M1776.5 690V694.200" stroke="#6e6e6e" stroke-width="1.500"/><path d="M1787.0 690V694.200" stroke="#6e6e6e" stroke-width="1.500"/><path d="M1797.4 690V694.200" stroke="#6e6e6e" stroke-width="1.500"/><path d="M1807.9 690V694.200" stroke="#6e6e6e" stroke-width="1.500"/><path d="M1818.3 686V694.200" stroke="#6e6e6e" stroke-width="1.500"/><path d="M1828.8 690V694.200" stroke="#6e6e6e" stroke-width="1.500"/><path d="M1839.3 690V694.200" stroke="#6e6e6e" stroke-width="1.500"/><path d="M1849.7 690V694.200" stroke="#6e6e6e" stroke-width="1.500"/><path d="M1860.2 690V694.200" stroke="#6e6e6e" stroke-width="1.500"/><path d="M1870.6 686V694.200" stroke="#6e6e6e" stroke-width="1.500"/><path d="M1881.1 690V694.200" stroke="#6e6e6e" stroke-width="1.500"/><path d="M1891.6 690V694.200" stroke="#6e6e6e" stroke-width="1.500"/><path d="M1902.0 690V694.200" stroke="#6e6e6e" stroke-width="1.500"/><path d="M1912.5 690V694.200" stroke="#6e6e6e" stroke-width="1.500"/></svg>
<span class="t" style="left:1028.9px;top:669.8px;line-height:17px;font-size:13px;color:#e0e0e0;transform:scaleX(0.950);transform-origin:50% 50%;">0</span>
<span class="t" style="left:1077.6px;top:669.8px;line-height:17px;font-size:13px;color:#e0e0e0;transform:scaleX(0.950);transform-origin:50% 50%;">15</span>
<span class="t" style="left:1129.8px;top:669.8px;line-height:17px;font-size:13px;color:#e0e0e0;transform:scaleX(0.950);transform-origin:50% 50%;">30</span>
<span class="t" style="left:1182.1px;top:669.8px;line-height:17px;font-size:13px;color:#e0e0e0;transform:scaleX(0.950);transform-origin:50% 50%;">45</span>
<span class="t" style="left:1234.4px;top:669.8px;line-height:17px;font-size:13px;color:#e0e0e0;transform:scaleX(0.950);transform-origin:50% 50%;">60</span>
<span class="t" style="left:1286.7px;top:669.8px;line-height:17px;font-size:13px;color:#e0e0e0;transform:scaleX(0.950);transform-origin:50% 50%;">75</span>
<span class="t" style="left:1339.0px;top:669.8px;line-height:17px;font-size:13px;color:#e0e0e0;transform:scaleX(0.950);transform-origin:50% 50%;">90</span>
<span class="t" style="left:1387.7px;top:669.8px;line-height:17px;font-size:13px;color:#e0e0e0;transform:scaleX(0.950);transform-origin:50% 50%;">105</span>
<span class="t" style="left:1440.0px;top:669.8px;line-height:17px;font-size:13px;color:#e0e0e0;transform:scaleX(0.950);transform-origin:50% 50%;">120</span>
<span class="t" style="left:1492.3px;top:669.8px;line-height:17px;font-size:13px;color:#e0e0e0;transform:scaleX(0.950);transform-origin:50% 50%;">135</span>
<span class="t" style="left:1544.5px;top:669.8px;line-height:17px;font-size:13px;color:#e0e0e0;transform:scaleX(0.950);transform-origin:50% 50%;">150</span>
<span class="t" style="left:1596.8px;top:669.8px;line-height:17px;font-size:13px;color:#e0e0e0;transform:scaleX(0.950);transform-origin:50% 50%;">165</span>
<span class="t" style="left:1649.1px;top:669.8px;line-height:17px;font-size:13px;color:#e0e0e0;transform:scaleX(0.950);transform-origin:50% 50%;">180</span>
<span class="t" style="left:1701.4px;top:669.8px;line-height:17px;font-size:13px;color:#e0e0e0;transform:scaleX(0.950);transform-origin:50% 50%;">195</span>
<span class="t" style="left:1753.7px;top:669.8px;line-height:17px;font-size:13px;color:#e0e0e0;transform:scaleX(0.950);transform-origin:50% 50%;">210</span>
<span class="t" style="left:1806.0px;top:669.8px;line-height:17px;font-size:13px;color:#e0e0e0;transform:scaleX(0.950);transform-origin:50% 50%;">225</span>
<span class="t" style="left:1858.3px;top:669.8px;line-height:17px;font-size:13px;color:#e0e0e0;transform:scaleX(0.950);transform-origin:50% 50%;">240</span>
<div style="left:1034px;top:714px;width:871px;height:18.1px;background:repeating-linear-gradient(135deg,#70d898 0,#70d898 8.600px,#8af5b5 8.600px,#7be3a5 12.700px);border-radius:2px;"></div>
<span class="t" style="left:1042.3px;top:714.3px;line-height:17px;font-size:13px;color:#1e2a22;transform:scaleX(0.953);transform-origin:0 50%;">Color Array</span>
<div style="left:1034px;top:735.8px;width:871px;height:18.2px;background-color:#fbe77e;background-image:radial-gradient(#d2bd52 0.650px,rgba(210,189,82,0) 1.050px);background-size:3px 3px;border:1px solid #ffffff;border-radius:3px;"></div>
<span class="t" style="left:1042.3px;top:736.3px;line-height:17px;font-size:13px;color:#2a2614;transform:scaleX(0.907);transform-origin:0 50%;">inputShape</span>
<div style="left:1034px;top:758.2px;width:871px;height:17.8px;background:#ffe57a;border-radius:2px;"></div>
<span class="t" style="left:1042.3px;top:758.3px;line-height:17px;font-size:13px;color:#2a2614;transform:scaleX(0.882);transform-origin:0 50%;">Background Shape</span>
<div style="left:1476.222px;top:693px;width:1.2px;height:269px;background:#7fd0b6;"></div>
<svg style="left:1469.222px;top:684px;" width="15" height="10" viewBox="0 0 15 10"><path d="M0.500 0.500h14L7.500 9.500z" fill="#7fd0b6"/></svg>
<div style="left:1027.5px;top:964px;width:884.5px;height:9.3px;background:#4a4a4a;border-radius:5px;"></div>
<div style="left:1026.6px;top:976px;width:887.4px;height:22px;background:#444444;"></div>
<div class="r3" style="left:1029px;top:978.3px;width:18px;height:17.7px;background:#2b2b2b;border:1px solid #1e1e1e;"></div>
<svg style="left:1031.5px;top:981px;" width="13" height="12" viewBox="0 0 13 12"><path d="M0 1.500h13M0 5.500h13" stroke="#e2e2e2" stroke-width="1.600"/><path d="M0 9.500h2.500M4.500 9.500h2.500M9 9.500h2.500" stroke="#e2e2e2" stroke-width="1.600"/></svg>
<div class="r3" style="left:1050.3px;top:979px;width:149.3px;height:16.5px;background:#2b2b2b;"></div>
<span class="t" style="left:1052.7px;top:979.0px;line-height:17px;font-size:13px;color:#e6e6e6;transform:scaleX(0.900);transform-origin:0 50%;">Default Keyframe Layer</span>
<div class="r3" style="left:1206.7px;top:979px;width:68.7px;height:16.5px;background:#2b2b2b;"></div>
<span class="t" style="left:1211.4px;top:979.0px;line-height:17px;font-size:13px;color:#5e5e5e;transform:scaleX(0.930);transform-origin:0 50%;">F</span>
<span class="t" style="left:1224.0px;top:979.0px;line-height:17px;font-size:13px;color:#cfcfcf;transform:scaleX(0.930);transform-origin:0 50%;">-</span>
<span class="t" style="left:1282.5px;top:979.0px;line-height:17px;font-size:13px;color:#e6e6e6;transform:scaleX(0.904);transform-origin:0 50%;">Align:</span>
<div class="r3" style="left:1319px;top:978.8px;width:51.2px;height:17px;background:#2b2b2b;border:1px solid #1e1e1e;"></div>
<svg style="left:1321.5px;top:981.3px;" width="12" height="12" viewBox="0 0 12 12"><path d="M1 0v12" stroke="#e2e2e2" stroke-width="1.100" fill="none"/><path d="M3.500 3.500h2M7 3.500h3M3.500 8.500h2M7 8.500h5" stroke="#e2e2e2" stroke-width="1.100" fill="none"/></svg>
<div style="left:1336px;top:979.8px;width:1px;height:15px;background:#1e1e1e;"></div>
<svg style="left:1338.5px;top:981.3px;" width="12" height="12" viewBox="0 0 12 12"><path d="M6 0v12" stroke="#e2e2e2" stroke-width="1.100" fill="none" stroke-dasharray="2 1.500"/><path d="M1 3.500h3.500M7.500 3.500H11M0 8.500h4.500M7.500 8.500H12" stroke="#e2e2e2" stroke-width="1.100" fill="none"/></svg>
<div style="left:1353px;top:979.8px;width:1px;height:15px;background:#1e1e1e;"></div>
<svg style="left:1355.5px;top:981.3px;" width="12" height="12" viewBox="0 0 12 12"><path d="M11 0v12" stroke="#e2e2e2" stroke-width="1.100" fill="none"/><path d="M2 3.500h3M6.500 3.500h2M0 8.500h5M6.500 8.500h2" stroke="#e2e2e2" stroke-width="1.100" fill="none"/></svg>
<div class="r3" style="left:1375px;top:978.8px;width:18px;height:17px;background:#2b2b2b;border:1px solid #1e1e1e;"></div>
<svg style="left:1378px;top:981.3px;" width="12" height="12" viewBox="0 0 12 12"><rect x="1" y="1" width="10" height="10" stroke="#e2e2e2" stroke-width="1.100" fill="none" stroke-dasharray="3 2"/><rect x="3.500" y="3.500" width="5" height="5" fill="#e2e2e2"/></svg>
<div class="r3" style="left:1397.2px;top:978.8px;width:30px;height:17px;background:#2b2b2b;border:1px solid #1e1e1e;"></div>
<div style="left:1416px;top:979.8px;width:1px;height:15px;background:#1e1e1e;"></div>
<svg style="left:1419px;top:984px;" width="6" height="7" viewBox="0 0 6 7"><path d="M0.500 0.500v6L5.500 3.500z" fill="none" stroke="#8a8a8a" stroke-width="0.9"/></svg>
<svg style="left:1400px;top:981px;" width="13" height="12" viewBox="0 0 13 12"><path d="M2.500 11.500 1.200 6.500A4.500 4.500 0 0 1 9.500 3.500l2.500 3" fill="none" stroke="#e2e2e2" stroke-width="2.400"/></svg>
<div class="r3" style="left:1431px;top:978.8px;width:31.5px;height:17px;background:#2b2b2b;border:1px solid #1e1e1e;"></div>
<div style="left:1451px;top:979.8px;width:1px;height:15px;background:#1e1e1e;"></div>
<svg style="left:1454px;top:984px;" width="6" height="7" viewBox="0 0 6 7"><path d="M0.500 0.500v6L5.500 3.500z" fill="none" stroke="#8a8a8a" stroke-width="0.9"/></svg>
<svg style="left:1434px;top:981.3px;" width="14" height="12" viewBox="0 0 14 12"><path d="M7 0v12M4.500 3v6M9.500 3v6M2 5v2M12 5v2M0 6h14" stroke="#e2e2e2" stroke-width="1.100" fill="none"/></svg>
<svg style="left:1742.5px;top:980.5px;" width="15" height="15" viewBox="0 0 15 15"><circle cx="6" cy="6" r="5" fill="none" stroke="#c8c8c8" stroke-width="1.100"/><path d="M3.500 6h5M9.800 9.800l3.500 3.500" stroke="#c8c8c8" stroke-width="1.300"/></svg>
<div style="left:1767px;top:986.3px;width:114px;height:2.5px;background:#3a3a3a;border-radius:2px;"></div>
<svg style="left:1761.3px;top:981.5px;" width="12" height="12" viewBox="0 0 12 12"><circle cx="6" cy="6" r="5" fill="#7fd0b6" stroke="#2f6f5c" stroke-width="1"/><circle cx="6" cy="6" r="2.200" fill="#a5e4d0"/></svg>
<svg style="left:1887px;top:980.5px;" width="15" height="15" viewBox="0 0 15 15"><circle cx="6" cy="6" r="5" fill="none" stroke="#c8c8c8" stroke-width="1.100"/><path d="M3.500 6h5M6 3.500v5M9.800 9.800l3.500 3.500" stroke="#c8c8c8" stroke-width="1.300"/></svg>
<div style="left:1021.5px;top:829px;width:2px;height:2px;background:#8a8a8a;"></div>
<div style="left:1021.5px;top:833px;width:2px;height:2px;background:#8a8a8a;"></div>
<div style="left:1021.5px;top:837px;width:2px;height:2px;background:#8a8a8a;"></div>
<div style="left:494.2px;top:1003.8px;width:1419.8px;height:22.2px;background:#3c3c3c;"></div>
<div style="left:498.5px;top:1009.5px;width:2px;height:2px;background:#8a8a8a;"></div>
<div style="left:498.5px;top:1013.5px;width:2px;height:2px;background:#8a8a8a;"></div>
<div style="left:498.5px;top:1017.5px;width:2px;height:2px;background:#8a8a8a;"></div>
<svg style="left:508.5px;top:1008px;" width="15" height="14" viewBox="0 0 15 14"><path d="M0.500 0.500h13v9.500h-3v3l-3-3h-7z" fill="none" stroke="#e2e2e2" stroke-width="1.100"/><path d="M3 3.500h8M3 5.500h8M3 7.500h8" stroke="#e2e2e2" stroke-width="1"/><path d="M12 14h3v-3z" fill="#35c46f"/></svg>
<div class="r2" style="left:527.7px;top:1008.3px;width:18.3px;height:14px;background:#e57373;"></div>
<span class="t" style="left:530.5px;top:1007.8px;line-height:15px;font-size:11px;color:#5a1818;transform:scaleX(0.930);transform-origin:50% 50%;">9+</span>
<div style="left:553.7px;top:1012.5px;width:6px;height:6px;background:#e57373;border-radius:3px;"></div>
<span class="t" style="left:565.0px;top:1007.0px;line-height:17px;font-size:13px;color:#e6e6e6;transform:scaleX(0.882);transform-origin:0 50%;">Save reminder: 86 minutes since your last save.</span>
<span class="t" style="left:1348.9px;top:1007.0px;line-height:17px;font-size:13px;color:#e6e6e6;transform:scaleX(0.803);transform-origin:0 50%;font-style:italic;">Click to see next message</span>
<div class="r2" style="left:1477.2px;top:1005.8px;width:79.8px;height:18px;background:#d4bc6a;"></div>
<span class="t" style="left:1482.9px;top:1006.5px;line-height:17px;font-size:13px;color:#26301f;transform:scaleX(0.872);transform-origin:0 50%;">Feedback</span>
<svg style="left:1538.5px;top:1008.5px;" width="14" height="13" viewBox="0 0 14 13"><path d="M2 0.500h6l3 3v9.500H2z" fill="#f4f4f4"/><path d="M3.500 4h5M3.500 6h5M3.500 8h3" stroke="#b8b8b8" stroke-width="0.8"/><path d="M5.500 11 12 4.500l1.500 1.500L7 12.500l-2 0.500z" fill="#f0a030"/><path d="M12 4.500l1.500 1.500 0.700-0.700a1 1 0 0 0-1.500-1.500z" fill="#e0607a"/></svg>
<div class="r2" style="left:1559.8px;top:1005.8px;width:109px;height:18px;background:#33c46e;"></div>
<span class="t" style="left:1565.5px;top:1006.5px;line-height:17px;font-size:13px;color:#26301f;transform:scaleX(0.891);transform-origin:0 50%;">Upgrade to Pro</span>
<svg style="left:1649px;top:1008.5px;" width="14" height="13" viewBox="0 0 14 13"><path d="M1 6.500c0-2 1-4 2.500-4.500l1.500 0.500 1.300 4c0.500 2 0 5-2 5.500-2 0.500-3.300-2.500-3.300-5.500z" fill="#f5c431"/><path d="M13 6.500c0-2-1-4-2.500-4.500L9 2.500l-1.300 4c-0.500 2 0 5 2 5.500 2 0.500 3.300-2.500 3.300-5.500z" fill="#f5c431"/><path d="M3 1 2.500 0M7 1V0M11 1l0.500-1" stroke="#5aa0e0" stroke-width="0.8"/></svg>
<div class="r2" style="left:1672px;top:1005.8px;width:129.5px;height:18px;background:#b794f6;"></div>
<span class="t" style="left:1677.7px;top:1006.5px;line-height:17px;font-size:13px;color:#26301f;transform:scaleX(0.899);transform-origin:0 50%;">New Beta Available</span>
<svg style="left:1782px;top:1008.5px;" width="14" height="13" viewBox="0 0 14 13"><circle cx="7" cy="8" r="5.500" fill="#f7c531"/><path d="M2 5.500 5.500 0 9 3.500z" fill="#b05ad0"/><circle cx="5" cy="7.500" r="0.800" fill="#5a3a10"/><circle cx="9" cy="7.500" r="0.800" fill="#5a3a10"/><path d="M8 10.500c1 0.500 2 0.500 3.500-0.500" stroke="#e05050" stroke-width="1.200" fill="none"/><circle cx="12.500" cy="3" r="0.800" fill="#e05050"/><circle cx="1" cy="10" r="0.800" fill="#4aa0e0"/></svg>
<div class="r2" style="left:1805.3px;top:1005.8px;width:105.2px;height:18px;background:#3fa9f0;"></div>
<span class="t" style="left:1811.0px;top:1006.5px;line-height:17px;font-size:13px;color:#26301f;transform:scaleX(0.872);transform-origin:0 50%;">Tips and Tricks</span>
<svg style="left:1890.5px;top:1008.5px;" width="14" height="13" viewBox="0 0 14 13"><path d="M13.500 0.500c-4 0-7 2-9 6l3 3c4-2 6-5 6-9z" fill="#e8e8ee"/><circle cx="9.500" cy="4.500" r="1.400" fill="#4a90d0"/><path d="M4.500 6.500 1.500 7 3.500 4.500 6 4.500z M7.500 9.500 7 12.500 9.500 10.500 9.500 8z" fill="#e0404a"/><path d="M4 9 1 13 5 10z" fill="#f5a030"/></svg>
<div class="r4" style="left:1372.5px;top:50.5px;width:27px;height:27px;background:#2c2c2c;border:1px solid #383838;"></div>
<svg style="left:1372.5px;top:50.4px;" width="27" height="27" viewBox="0 0 27 27"><circle cx="6.0" cy="6.0" r="1.600" fill="#f3e06c"/><circle cx="6.0" cy="13.5" r="1.600" fill="#f3e06c"/><circle cx="6.0" cy="21.0" r="1.600" fill="#f3e06c"/><circle cx="13.5" cy="6.0" r="1.600" fill="#f3e06c"/><circle cx="13.5" cy="13.5" r="1.600" fill="#f3e06c"/><circle cx="13.5" cy="21.0" r="1.600" fill="#f3e06c"/><circle cx="21.0" cy="6.0" r="1.600" fill="#f3e06c"/><circle cx="21.0" cy="13.5" r="1.600" fill="#f3e06c"/><circle cx="21.0" cy="21.0" r="1.600" fill="#f3e06c"/></svg>
<div class="r4" style="left:1402.5px;top:50.5px;width:27px;height:27px;background:#2c2c2c;border:1px solid #383838;"></div>
<svg style="left:1402.5px;top:50.4px;" width="27" height="27" viewBox="0 0 27 27"><path d="M5 9.500h11v11H5z" fill="#e8d66b"/><path d="M5 9.500 9.500 5.500h11L16 9.500z" fill="#f4f4f4"/><path d="M16 9.500 20.500 5.500v11L16 20.500z" fill="#bdbdbd"/></svg>
<div class="r4" style="left:1432.5px;top:50.5px;width:27px;height:27px;background:#2c2c2c;border:1px solid #383838;"></div>
<svg style="left:1432.5px;top:50.4px;" width="27" height="27" viewBox="0 0 27 27"><rect x="4" y="4" width="19" height="19" rx="5" fill="none" stroke="#dcdcdc" stroke-width="1.3"/><path d="M8.500 7.500h2.200v12H8.500z M12 7.500h6.500v2.600H12z M12 12h4.500v2.400H12z" fill="#e8d66b"/></svg>
<div class="r4" style="left:1462.5px;top:50.5px;width:27px;height:27px;background:#2c2c2c;border:1px solid #383838;"></div>
<svg style="left:1462.5px;top:50.4px;" width="27" height="27" viewBox="0 0 27 27"><circle cx="6.500" cy="5.500" r="1.600" fill="#e8d66b"/><circle cx="17.500" cy="5" r="1.500" fill="#dcdcdc"/><circle cx="11.500" cy="9" r="1.500" fill="#dcdcdc"/><circle cx="20.500" cy="12.500" r="2.600" fill="#e8d66b"/><circle cx="13" cy="16" r="2.400" fill="#dcdcdc"/><circle cx="5.500" cy="17" r="1.500" fill="#e8d66b"/><circle cx="18.500" cy="21" r="1.600" fill="#e8d66b"/></svg>
<div class="r4" style="left:1497.5px;top:50.5px;width:27px;height:27px;background:#2c2c2c;border:1px solid #383838;"></div>
<svg style="left:1497.5px;top:50.4px;" width="27" height="27" viewBox="0 0 27 27"><path d="M3 13.500h2M7.500 13.500h3M13 13.500h9" stroke="#8fd694" stroke-width="1.800" fill="none"/><path d="M16.500 7.500 22.500 13.500 16.500 19.500" stroke="#8fd694" stroke-width="1.800" fill="none"/></svg>
<div class="r4" style="left:1527.5px;top:50.5px;width:27px;height:27px;background:#2c2c2c;border:1px solid #383838;"></div>
<svg style="left:1527.5px;top:50.4px;" width="27" height="27" viewBox="0 0 27 27"><path d="M5 4v19" stroke="#dcdcdc" stroke-width="1.200"/><rect x="8.500" y="7" width="9" height="5" fill="#8fd694"/><rect x="8.500" y="14.500" width="14" height="5" fill="#8fd694"/></svg>
<div class="r4" style="left:1562.5px;top:50.5px;width:27px;height:27px;background:#2c2c2c;border:1px solid #383838;"></div>
<svg style="left:1562.5px;top:50.4px;" width="27" height="27" viewBox="0 0 27 27"><path d="M13.500 4v19M4 13.500h19" stroke="#555" stroke-width="3"/><circle cx="13.5" cy="5" r="2" fill="#8ec8f4"/><circle cx="13.5" cy="13.5" r="2" fill="#8ec8f4"/><circle cx="13.5" cy="22" r="2" fill="#8ec8f4"/><circle cx="5" cy="13.5" r="2" fill="#8ec8f4"/><circle cx="22" cy="13.5" r="2" fill="#8ec8f4"/></svg>
<div class="r4" style="left:1592.5px;top:50.5px;width:27px;height:27px;background:#2c2c2c;border:1px solid #383838;"></div>
<svg style="left:1592.5px;top:50.4px;" width="27" height="27" viewBox="0 0 27 27"><path d="M5 13.500h17" stroke="#555" stroke-width="3"/><circle cx="5.5" cy="13.500" r="2.100" fill="#8ec8f4"/><circle cx="13.5" cy="13.500" r="2.100" fill="#8ec8f4"/><circle cx="21.5" cy="13.500" r="2.100" fill="#8ec8f4"/></svg>
<div class="r4" style="left:1622.5px;top:50.5px;width:27px;height:27px;background:#2c2c2c;border:1px solid #383838;"></div>
<svg style="left:1622.5px;top:50.4px;" width="27" height="27" viewBox="0 0 27 27"><path d="M17 6.500a7.500 7.500 0 1 0 0 14" fill="none" stroke="#dcdcdc" stroke-width="1.800"/><path d="M14.500 3v4.500M14.500 19.500V24" stroke="#8fd694" stroke-width="1.800"/></svg>
<div class="r4" style="left:1652.5px;top:50.5px;width:27px;height:27px;background:#2c2c2c;border:1px solid #383838;"></div>
<svg style="left:1652.5px;top:50.4px;" width="27" height="27" viewBox="0 0 27 27"><path d="M3 8h21M3 18.500h21" stroke="#dcdcdc" stroke-width="1"/><rect x="3.500" y="10.500" width="4" height="5.500" fill="#e8d66b"/><rect x="9.500" y="10.500" width="8.500" height="5.500" fill="#e8d66b"/><rect x="20" y="10.500" width="4" height="5.500" fill="#e8d66b"/></svg>
<div class="r4" style="left:1687.5px;top:50.5px;width:27px;height:27px;background:#2c2c2c;border:1px solid #383838;"></div>
<svg style="left:1687.5px;top:50.4px;" width="27" height="27" viewBox="0 0 27 27"><g transform="rotate(-14 13 12)"><path d="M5.500 5.500h13v3h-5v11.500h-3V8.500h-5z" fill="#e8d66b"/></g><path d="M4.500 20.500c4 3.500 7 0 10.500-1s6-0.500 9 2.500" fill="none" stroke="#dcdcdc" stroke-width="1.200"/></svg>
<div class="r4" style="left:1722.5px;top:50.5px;width:27px;height:27px;background:#2c2c2c;border:1px solid #383838;"></div>
<svg style="left:1722.5px;top:50.4px;" width="27" height="27" viewBox="0 0 27 27"><path d="M3.500 5h20" stroke="#8ec8f4" stroke-width="1.800"/><rect x="3.500" y="8.500" width="4" height="4" fill="#dcdcdc"/><rect x="9" y="13.500" width="9" height="4" fill="#dcdcdc"/><rect x="19" y="18.500" width="4.500" height="4" fill="#dcdcdc"/></svg>
<div class="r4" style="left:1752.5px;top:50.5px;width:27px;height:27px;background:#2c2c2c;border:1px solid #383838;"></div>
<svg style="left:1752.5px;top:50.4px;" width="27" height="27" viewBox="0 0 27 27"><path d="M3.500 5h20" stroke="#8ec8f4" stroke-width="1.800"/><rect x="3.500" y="8.500" width="11.500" height="4" fill="#dcdcdc"/><rect x="8" y="13.500" width="11.500" height="4" fill="#dcdcdc"/><rect x="12.500" y="18.500" width="11" height="4" fill="#dcdcdc"/></svg>
<div class="r4" style="left:1787.5px;top:50.5px;width:27px;height:27px;background:#2c2c2c;border:1px solid #383838;"></div>
<svg style="left:1787.5px;top:50.4px;" width="27" height="27" viewBox="0 0 27 27"><rect x="3" y="6" width="21" height="15" fill="none" stroke="#dcdcdc" stroke-width="1.100"/><rect x="5.500" y="8.500" width="4" height="10" fill="#e8d66b"/><rect x="11.500" y="8.500" width="4" height="10" fill="#e8d66b"/><rect x="17.500" y="8.500" width="4" height="10" fill="#e8d66b"/></svg>
<div class="r4" style="left:1817.5px;top:50.5px;width:27px;height:27px;background:#2c2c2c;border:1px solid #383838;"></div>
<svg style="left:1817.5px;top:50.4px;" width="27" height="27" viewBox="0 0 27 27"><rect x="3" y="6" width="21" height="15" fill="none" stroke="#dcdcdc" stroke-width="1.100"/><rect x="5.500" y="8.500" width="16" height="4" fill="#e8d66b"/><rect x="5.500" y="14.500" width="16" height="4" fill="#e8d66b"/></svg>
<div class="r4" style="left:1847.5px;top:50.5px;width:27px;height:27px;background:#2c2c2c;border:1px solid #383838;"></div>
<svg style="left:1847.5px;top:50.4px;" width="27" height="27" viewBox="0 0 27 27"><rect x="3" y="6" width="21" height="15" fill="none" stroke="#dcdcdc" stroke-width="1.100"/><rect x="5.500" y="8.500" width="7" height="4" fill="#e8d66b"/><rect x="14.500" y="8.500" width="7" height="4" fill="#e8d66b"/><rect x="5.500" y="14.500" width="7" height="4" fill="#e8d66b"/><rect x="14.500" y="14.500" width="7" height="4" fill="#e8d66b"/></svg>
<div class="r4" style="left:1882.5px;top:50.5px;width:27px;height:27px;background:#2c2c2c;border:1px solid #383838;"></div>
<svg style="left:1882.5px;top:50.4px;" width="27" height="27" viewBox="0 0 27 27"><path d="M4 8.500h12.500v11H4z M17.500 12.500 23.500 8.500v11l-6-4z" fill="#dcdcdc"/><rect x="6" y="6" width="6.500" height="1.500" fill="#dcdcdc"/><circle cx="7.500" cy="11.500" r="1.300" fill="#2e2e2e"/></svg>
<div style="left:1492.0px;top:63px;width:3px;height:3px;background:#2a2a2a;border-radius:2px;"></div>
<div style="left:1557.0px;top:63px;width:3px;height:3px;background:#2a2a2a;border-radius:2px;"></div>
<div style="left:1682.0px;top:63px;width:3px;height:3px;background:#2a2a2a;border-radius:2px;"></div>
<div style="left:1717.0px;top:63px;width:3px;height:3px;background:#2a2a2a;border-radius:2px;"></div>
<div style="left:1782.0px;top:63px;width:3px;height:3px;background:#2a2a2a;border-radius:2px;"></div>
<div style="left:1877.0px;top:63px;width:3px;height:3px;background:#2a2a2a;border-radius:2px;"></div>
<div style="left:1368px;top:46px;width:42px;height:39px;border:3px solid #b3e620;"></div>
<div style="left:1388px;top:80px;width:434px;height:32px;background:#2a2a2a;box-shadow:2px 2px 3px rgba(0,0,0,0.6);"></div>
<span class="t" style="left:1390.0px;top:80.5px;line-height:17px;font-size:13px;color:#c9c9c9;transform:scaleX(0.915);transform-origin:0 50%;">Create a Duplicator</span>
<span class="t" style="left:1390.0px;top:95.5px;line-height:17px;font-size:13px;color:#c9c9c9;transform:scaleX(0.895);transform-origin:0 50%;">Any selected shapes will automatically be added as input shapes for the Duplicator.</span>
</body></html>
